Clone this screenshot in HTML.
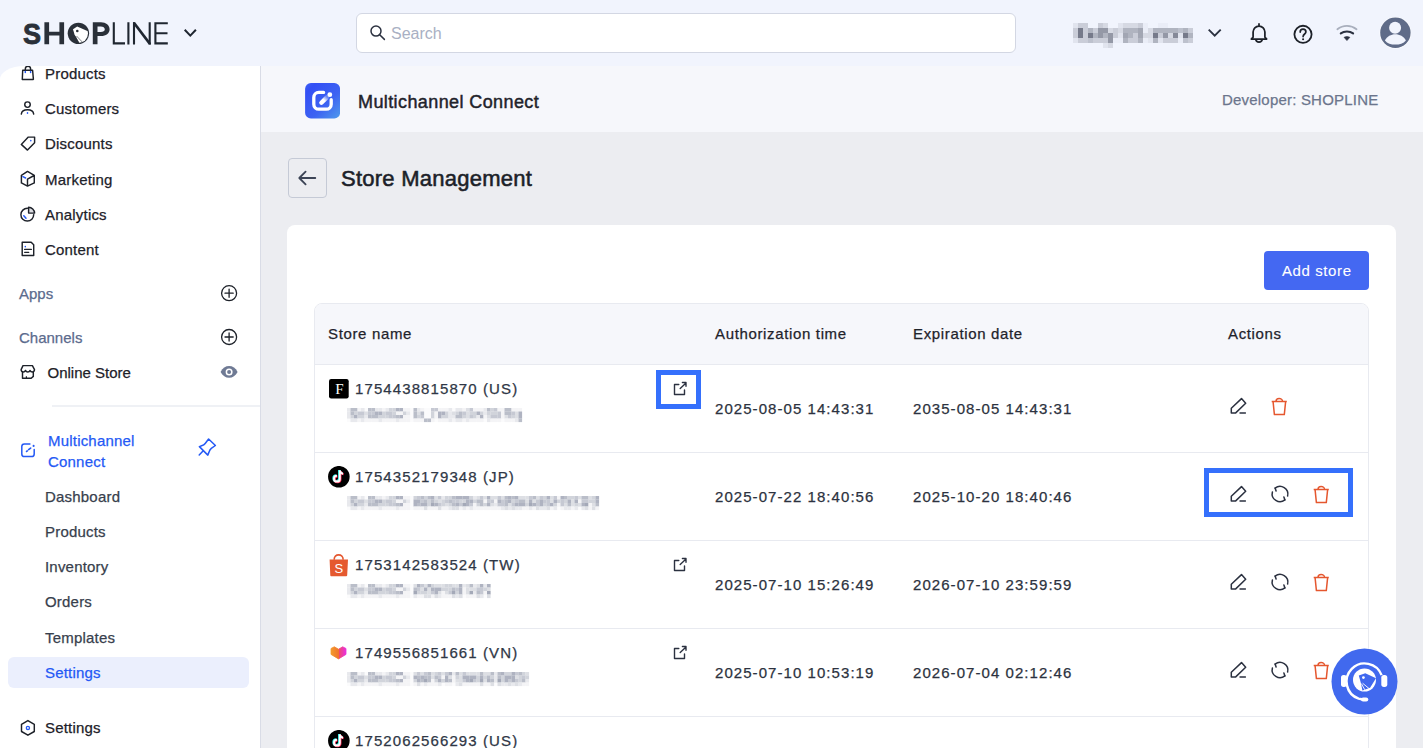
<!DOCTYPE html>
<html><head><meta charset="utf-8">
<style>
*{margin:0;padding:0;box-sizing:border-box}
html,body{-webkit-text-stroke:0.25px currentColor;width:1423px;height:748px;overflow:hidden;background:#f1f4fd;font-family:"Liberation Sans",sans-serif;}
.a{position:absolute;white-space:nowrap}
#hdr{position:absolute;left:0;top:0;width:1423px;height:66px;background:#f1f4fd}
#side{position:absolute;left:0;top:66px;width:261px;height:682px;background:#fff;border-right:1px solid #d9dce6;border-top-left-radius:24px 13.5px;overflow:hidden}
#main{position:absolute;left:261px;top:66px;width:1162px;height:682px;background:#ecedf1}
#apphdr{position:absolute;left:0;top:0;width:1162px;height:66px;background:#f6f7fb}
.si{position:absolute;font-size:15px;color:#1d2129;line-height:18px;letter-spacing:0.2px}
.sub{position:absolute;font-size:15px;color:#383f4d;line-height:18px;left:45px;letter-spacing:0.2px}
.lbl{position:absolute;font-size:15px;color:#5b6b8d;line-height:18px;left:19px}
.card{position:absolute;left:27px;top:159px;width:1107px;height:600px;background:#fff;border-radius:8px}
.tbl{position:absolute;left:53px;top:237px;width:1055px;height:600px;border:1px solid #e8eaf0;border-radius:8px;overflow:hidden}
.th{position:absolute;left:0;top:0;width:1055px;height:61px;background:#f6f7fb;border-bottom:1px solid #e8eaf0}
.row{position:absolute;left:0;width:1055px;height:88px;border-bottom:1px solid #e8eaf0}
.nm{font-size:15px;line-height:18px;color:#2f3746;letter-spacing:1.1px}
.dt{font-size:15px;line-height:18px;color:#2c3240;letter-spacing:1.06px}
.t15{font-size:15px;line-height:18px;color:#2c3240;letter-spacing:0.65px}
</style></head>
<body>
<div id="hdr">
  <svg class="a" style="left:0;top:0" width="220" height="66" viewBox="0 0 220 66">
    <text x="23.1" y="44.3" font-family="Liberation Sans" font-weight="bold" font-size="30" fill="#2a3039" stroke="#2a3039" stroke-width="0.9" textLength="18" lengthAdjust="spacingAndGlyphs">S</text>
    <path d="M44.4 22.3h4.7v9.4h10.3v-9.4h4.7v22h-4.7v-8.9h-10.3v8.9h-4.7z" fill="#2a3039"/>
    <defs><clipPath id="oc"><circle cx="78.4" cy="33.35" r="9.6"/></clipPath></defs>
    <circle cx="78.4" cy="33.35" r="10.7" fill="#2a3039"/>
    <g clip-path="url(#oc)">
      <path d="M73 29.2 L77.2 26.6 L92 33 L86 48 L80.5 45 L74.5 34.5 Z" fill="#fff"/>
      <path d="M75.2 36.2 L79.8 44.5 M76.5 36 L84 43.8" stroke="#2a3039" stroke-width="0.6"/>
    </g>
    <circle cx="77.3" cy="31" r="1.3" fill="#2a3039"/>
    <path d="M92.8 22.3h8.2c5 0 8.6 3 8.6 6.9s-3.6 6.9-8.6 6.9h-3.5v8.2h-4.7z M97.5 26.4v5.6h3.3c2.4 0 4-1.1 4-2.8s-1.6-2.8-4-2.8z" fill="#2a3039" fill-rule="evenodd"/>
    <path d="M113.8 22.3V43.4H125 M128.4 22.3V44.4 M134 44.4V22.3 M149.7 44.4V22.3 M167.8 23.3H155.4V43.4H167.8 M155.4 33.2H167.5" stroke="#1f2630" stroke-width="2.1" fill="none"/>
    <path d="M133 22.3h2.2l15.7 20.6v1.5h-2.2l-15.7-20.6z" fill="#1f2630"/>
    <path d="M184.7 29.8l5.6 5.8 5.6-5.8" stroke="#1f2630" stroke-width="2" fill="none"/>
  </svg>
  <div class="a" style="left:356px;top:13px;width:660px;height:40px;background:#fff;border:1px solid #d3d7e3;border-radius:6px"></div>
  <svg class="a" style="left:366px;top:22px" width="24" height="22" viewBox="0 0 24 22">
    <circle cx="10" cy="9.1" r="5" stroke="#2b3140" stroke-width="1.5" fill="none"/>
    <path d="M13.7 12.8L18.4 17.4" stroke="#2b3140" stroke-width="1.5" stroke-linecap="round"/>
  </svg>
  <div class="a" style="left:391px;top:25px;font-size:16px;color:#a9b0c3;line-height:18px;-webkit-text-stroke:0">Search</div>
  <svg class="a" width="121" height="25" viewBox="0 0 121 25" shape-rendering="crispEdges" style="left:1073px;top:23px;filter:blur(0.5px)"><rect x="0" y="0" width="5" height="5" fill="#e1e4ee"/><rect x="0" y="5" width="5" height="5" fill="#cacdd8"/><rect x="0" y="10" width="5" height="5" fill="#cacdd8"/><rect x="0" y="15" width="5" height="5" fill="#e1e4ee"/><rect x="5" y="0" width="5" height="5" fill="#cacdd8"/><rect x="5" y="5" width="5" height="5" fill="#767a8a"/><rect x="5" y="10" width="5" height="5" fill="#767a8a"/><rect x="5" y="15" width="5" height="5" fill="#cacdd8"/><rect x="10" y="0" width="5" height="5" fill="#cacdd8"/><rect x="10" y="5" width="5" height="5" fill="#cacdd8"/><rect x="10" y="10" width="5" height="5" fill="#cacdd8"/><rect x="10" y="15" width="5" height="5" fill="#cacdd8"/><rect x="15" y="5" width="5" height="5" fill="#b0b4c0"/><rect x="15" y="10" width="5" height="5" fill="#767a8a"/><rect x="15" y="15" width="5" height="5" fill="#bdc1cd"/><rect x="20" y="5" width="5" height="5" fill="#cacdd8"/><rect x="20" y="10" width="5" height="5" fill="#b0b4c0"/><rect x="20" y="15" width="5" height="5" fill="#cacdd8"/><rect x="25" y="0" width="5" height="5" fill="#cacdd8"/><rect x="25" y="5" width="5" height="5" fill="#9498a6"/><rect x="25" y="10" width="5" height="5" fill="#9498a6"/><rect x="25" y="15" width="5" height="5" fill="#cacdd8"/><rect x="30" y="0" width="5" height="5" fill="#d6d9e3"/><rect x="30" y="5" width="5" height="5" fill="#9498a6"/><rect x="30" y="10" width="5" height="5" fill="#b0b4c0"/><rect x="30" y="15" width="5" height="5" fill="#cacdd8"/><rect x="30" y="20" width="5" height="5" fill="#e1e4ee"/><rect x="35" y="5" width="5" height="5" fill="#d6d9e3"/><rect x="35" y="10" width="5" height="5" fill="#9498a6"/><rect x="35" y="15" width="5" height="5" fill="#9498a6"/><rect x="35" y="20" width="5" height="5" fill="#d6d9e3"/><rect x="40" y="5" width="5" height="5" fill="#cacdd8"/><rect x="40" y="10" width="5" height="5" fill="#cacdd8"/><rect x="40" y="15" width="5" height="5" fill="#eaedf7"/><rect x="45" y="0" width="5" height="5" fill="#e1e4ee"/><rect x="45" y="5" width="5" height="5" fill="#d6d9e3"/><rect x="45" y="10" width="5" height="5" fill="#e1e4ee"/><rect x="45" y="15" width="5" height="5" fill="#eaedf7"/><rect x="50" y="0" width="5" height="5" fill="#d6d9e3"/><rect x="50" y="5" width="5" height="5" fill="#b0b4c0"/><rect x="50" y="10" width="5" height="5" fill="#a2a6b3"/><rect x="50" y="15" width="5" height="5" fill="#b0b4c0"/><rect x="55" y="0" width="5" height="5" fill="#d6d9e3"/><rect x="55" y="5" width="5" height="5" fill="#b0b4c0"/><rect x="55" y="10" width="5" height="5" fill="#b0b4c0"/><rect x="55" y="15" width="5" height="5" fill="#cacdd8"/><rect x="60" y="0" width="5" height="5" fill="#d6d9e3"/><rect x="60" y="5" width="5" height="5" fill="#b0b4c0"/><rect x="60" y="10" width="5" height="5" fill="#cacdd8"/><rect x="60" y="15" width="5" height="5" fill="#cacdd8"/><rect x="65" y="0" width="5" height="5" fill="#cacdd8"/><rect x="65" y="5" width="5" height="5" fill="#a2a6b3"/><rect x="65" y="10" width="5" height="5" fill="#a2a6b3"/><rect x="65" y="15" width="5" height="5" fill="#b0b4c0"/><rect x="70" y="0" width="5" height="5" fill="#eaedf7"/><rect x="70" y="5" width="5" height="5" fill="#eaedf7"/><rect x="70" y="10" width="5" height="5" fill="#d6d9e3"/><rect x="70" y="15" width="5" height="5" fill="#eaedf7"/><rect x="75" y="5" width="5" height="5" fill="#d6d9e3"/><rect x="75" y="10" width="5" height="5" fill="#d6d9e3"/><rect x="75" y="15" width="5" height="5" fill="#e1e4ee"/><rect x="80" y="5" width="5" height="5" fill="#b0b4c0"/><rect x="80" y="10" width="5" height="5" fill="#767a8a"/><rect x="80" y="15" width="5" height="5" fill="#b0b4c0"/><rect x="85" y="0" width="5" height="5" fill="#eaedf7"/><rect x="85" y="5" width="5" height="5" fill="#b0b4c0"/><rect x="85" y="10" width="5" height="5" fill="#cacdd8"/><rect x="85" y="15" width="5" height="5" fill="#e1e4ee"/><rect x="90" y="0" width="5" height="5" fill="#eaedf7"/><rect x="90" y="5" width="5" height="5" fill="#b0b4c0"/><rect x="90" y="10" width="5" height="5" fill="#9498a6"/><rect x="90" y="15" width="5" height="5" fill="#cacdd8"/><rect x="95" y="5" width="5" height="5" fill="#b0b4c0"/><rect x="95" y="10" width="5" height="5" fill="#d6d9e3"/><rect x="95" y="15" width="5" height="5" fill="#cacdd8"/><rect x="100" y="5" width="5" height="5" fill="#b0b4c0"/><rect x="100" y="10" width="5" height="5" fill="#858998"/><rect x="100" y="15" width="5" height="5" fill="#cacdd8"/><rect x="105" y="5" width="5" height="5" fill="#bdc1cd"/><rect x="105" y="10" width="5" height="5" fill="#e1e4ee"/><rect x="105" y="15" width="5" height="5" fill="#eaedf7"/><rect x="110" y="5" width="5" height="5" fill="#b0b4c0"/><rect x="110" y="10" width="5" height="5" fill="#767a8a"/><rect x="110" y="15" width="5" height="5" fill="#bdc1cd"/><rect x="115" y="5" width="5" height="5" fill="#cacdd8"/><rect x="115" y="10" width="5" height="5" fill="#b0b4c0"/><rect x="115" y="15" width="5" height="5" fill="#cacdd8"/></svg>
  <svg class="a" style="left:1205px;top:25px" width="20" height="16" viewBox="0 0 20 16">
    <path d="M3.7 4.6l6 6 6-6" stroke="#2b3140" stroke-width="1.9" fill="none"/>
  </svg>
  <svg class="a" style="left:1246px;top:20px" width="26" height="26" viewBox="0 0 26 26">
    <path d="M13 3.9v2.1 M7.1 17.2V12.1c0-3.3 2.6-6.1 5.9-6.1s5.9 2.8 5.9 6.1v5.1l1.8 1.8H5.3z M9.7 19.2c.3 1.8 1.6 3 3.3 3s3-1.2 3.3-3" stroke="#1d2129" stroke-width="1.75" fill="none" stroke-linejoin="round" stroke-linecap="round"/>
  </svg>
  <svg class="a" style="left:1290px;top:21px" width="26" height="26" viewBox="0 0 26 26">
    <circle cx="13" cy="13.35" r="8.6" stroke="#1d2129" stroke-width="1.8" fill="none"/>
    <path d="M10.2 11.1c0-1.7 1.2-2.9 2.8-2.9s2.9 1.2 2.9 2.8c0 1.9-2.8 2.2-2.8 4.6" stroke="#1d2129" stroke-width="1.7" fill="none" stroke-linecap="round"/>
    <circle cx="13.1" cy="18.2" r="1.05" fill="#1d2129"/>
  </svg>
  <svg class="a" style="left:1334px;top:20px" width="26" height="26" viewBox="0 0 26 26">
    <path d="M3.4 9.2C6 7.1 9.3 5.9 12.95 5.9S19.9 7.1 22.5 9.2" stroke="#a9afbd" stroke-width="1.9" fill="none" stroke-linecap="round"/>
    <path d="M6.8 13.3C8.5 12.1 10.6 11.5 12.95 11.5S17.4 12.1 19.1 13.3" stroke="#2b3140" stroke-width="2.1" fill="none" stroke-linecap="round"/>
    <path d="M10 17.3Q12.95 15.6 15.9 17.3L12.95 20.6z" fill="#2b3140" stroke="#2b3140" stroke-width="0.6" stroke-linejoin="round"/>
  </svg>
  <svg class="a" style="left:1379px;top:17px" width="33" height="33" viewBox="0 0 33 33">
    <circle cx="16.4" cy="15.8" r="15.8" fill="#fff"/>
    <circle cx="16.4" cy="15.8" r="15.2" fill="#5f6b88"/>
    <circle cx="16.1" cy="10.7" r="6" fill="#f1f4fd"/>
    <path d="M5.9 23.4C8 19.4 12 17.2 16.3 17.2S24.8 19.4 26.9 23.4C24.4 26.3 20.6 27.6 16.3 27.6S8.3 26.3 5.9 23.4Z" fill="#f1f4fd"/>
  </svg>
</div>

<div id="side">
<svg class="a" style="left:0;top:-66px" width="260" height="748" viewBox="0 0 260 748">
  <g fill="none" stroke="#1d2129" stroke-width="1.45" stroke-linejoin="round" stroke-linecap="round">
    <path d="M22.7 70.2H32.6L33.4 79.4H22.3Z"/>
    <path d="M25.3 70V68.9C25.3 67.4 26.5 66.3 28 66.3S30.6 67.4 30.6 68.9V70"/>
    <circle cx="27.5" cy="104.6" r="2.75"/>
    <path d="M21.3 114.1C21.6 111.4 24.3 109.7 27.5 109.7S33.4 111.4 33.7 114.1"/>
    <path d="M21.3 144.4L28.3 137.1H34.6V142.8L27.5 150.1Z"/>
    <path d="M27.5 171.4L34.3 175.3V182.9L27.5 186.1L21.4 182.9V175.3Z M27.5 179.2L34.1 175.5 M27.5 179.2V185.8"/>
    <path d="M27.4 208.3A6.4 6.4 0 1 0 33.7 214.6"/>
    <path d="M28.6 213.1V207.3A6.1 6.1 0 0 1 34.6 213.1Z" fill="#dcdde2"/>
    <path d="M22.2 242.3H31.2L33.7 244.8V255.5H22.2Z"/>
    <path d="M24.6 249.4H31.4 M24.6 252.3H28.8" stroke-width="1.2"/>
    <path d="M23 365.6H32.4L34.5 369.6C34.5 371 33.5 372 32.3 372S30.4 371.2 30.1 370.4C29.7 371.3 28.9 372 27.8 372S25.9 371.3 25.5 370.4C25.1 371.3 24.3 372 23.3 372C22 372 21.1 371 21.1 369.6Z"/>
    <path d="M22.5 372.2V378.3H31.2L33.3 376.4V372.2"/>
    <circle cx="229.1" cy="293.2" r="7.5" stroke-width="1.3"/>
    <path d="M229.1 289.1V297.3 M225 293.2H233.2" stroke-width="1.3"/>
    <circle cx="229.1" cy="337" r="7.5" stroke-width="1.3"/>
    <path d="M229.1 332.9V341.1 M225 337H233.2" stroke-width="1.3"/>
    <path d="M27.9 720.6L34.3 724.3V731.5L27.9 735.2L21.5 731.5V724.3Z"/>
  </g>
  <path d="M25.8 376.2H27V378H25.8z" fill="#1d2129"/>
  <g stroke="#2459f5" stroke-width="1.5" stroke-linecap="round" fill="none">
    <path d="M25.3 71.6V72.6 M30.6 71.6V72.6"/>
    <path d="M27.5 112.7V113.2"/>
    <path d="M30.8 140.5V140.8"/>
    <path d="M22.9 176.6L25.6 178"/>
    <path d="M23.8 215.7L26 218.2"/>
    <path d="M25.3 246.5V246.7"/>
  </g>
  <circle cx="27.9" cy="727.9" r="1.6" fill="none" stroke="#2459f5" stroke-width="1.3"/>
  <path d="M220.6 371.9C222.6 368.1 225.6 366.1 229.1 366.1S235.6 368.1 237.6 371.9C235.6 375.7 232.6 377.7 229.1 377.7S222.6 375.7 220.6 371.9Z" fill="#6f7a94"/>
  <circle cx="229.1" cy="371.9" r="3.5" fill="#fff"/>
  <circle cx="229.1" cy="371.9" r="2" fill="#6f7a94"/>
  <g fill="none" stroke="#2459f5" stroke-width="1.5" stroke-linecap="round" stroke-linejoin="round">
    <path d="M29.9 444H24.4C22.9 444 21.8 445.1 21.8 446.6V454C21.8 455.5 22.9 456.6 24.4 456.6H31.6C33.1 456.6 34.2 455.5 34.2 454V449.4"/>
    <path d="M26.6 451.4L27.3 450.9 M28.6 449.6L30.6 448.1" stroke-width="1.7"/>
    <path d="M208.6 439L215.4 445.5L211.3 448.3C209.8 449.5 209.4 450.8 208.7 452.9L207.8 455.1L199.4 446.6L201.6 445.8C203.4 445.3 204.4 444.6 205.2 443.5Z"/>
    <path d="M203 451.1L199.2 455"/>
  </g>
  <circle cx="33.6" cy="445.9" r="1.05" fill="#2459f5"/>
</svg>
  <div class="si" style="left:45px;top:-1px">Products</div>
  <div class="si" style="left:45px;top:34px">Customers</div>
  <div class="si" style="left:45px;top:69px">Discounts</div>
  <div class="si" style="left:45px;top:105px">Marketing</div>
  <div class="si" style="left:45px;top:140px">Analytics</div>
  <div class="si" style="left:45px;top:175px">Content</div>
  <div class="lbl" style="top:219px">Apps</div>
  <div class="lbl" style="top:263px">Channels</div>
  <div class="si" style="left:47.5px;top:298px;letter-spacing:0">Online Store</div>
  <div class="a" style="left:52px;top:339px;width:208px;height:2px;background:#eff1f5"></div>
  <div class="si" style="left:48px;top:364px;color:#2459f5;line-height:22px">Multichannel</div><div class="si" style="left:48px;top:385px;color:#2459f5;line-height:22px">Connect</div>
  <div class="sub" style="top:422px">Dashboard</div>
  <div class="sub" style="top:457px">Products</div>
  <div class="sub" style="top:492px">Inventory</div>
  <div class="sub" style="top:527px">Orders</div>
  <div class="sub" style="top:563px">Templates</div>
  <div class="a" style="left:8px;top:591px;width:241px;height:31px;background:#ebeffd;border-radius:6px"></div>
  <div class="sub" style="top:598px;color:#2459f5">Settings</div>
  <div class="si" style="left:45px;top:653px">Settings</div>
</div>

<div id="main"></div>
<div class="a" style="left:261px;top:66px;width:1162px;height:66px;background:#f6f7fb"></div>
<svg class="a" style="left:305px;top:83px" width="35" height="36" viewBox="0 0 35 36">
  <defs><linearGradient id="ag" x1="0" y1="0" x2="1" y2="1"><stop offset="0" stop-color="#3f62f4"/><stop offset="0.15" stop-color="#334ff5"/><stop offset="0.6" stop-color="#3d63f2"/><stop offset="1" stop-color="#4f9bec"/></linearGradient>
  <linearGradient id="pg" x1="16.4" y1="19.75" x2="22" y2="14" gradientUnits="userSpaceOnUse"><stop offset="0" stop-color="#fff"/><stop offset="0.45" stop-color="#fff"/><stop offset="1" stop-color="#fff" stop-opacity="0.25"/></linearGradient></defs>
  <rect x="0.1" y="0.1" width="35" height="35.4" rx="5.8" fill="url(#ag)"/>
  <path d="M18.6 9.4H13.8C11 9.4 8.8 11.6 8.8 14.4V21.2C8.8 24 11 26.2 13.8 26.2H21.2C24 26.2 26.2 24 26.2 21.2V16.7" stroke="#fff" stroke-width="3.3" fill="none" stroke-linecap="round"/>
  <circle cx="24.8" cy="11.7" r="2.4" fill="#fff"/>
  <path d="M16.4 19.75L21.8 14.4" stroke="url(#pg)" stroke-width="4.4" stroke-linecap="round"/>
</svg>
<div class="a" style="left:358px;top:91px;font-size:18px;color:#1f232b;line-height:22px;letter-spacing:0.4px;-webkit-text-stroke:0.45px #1f232b">Multichannel Connect</div>
<div class="a" style="left:1222px;top:91px;font-size:15px;color:#6b758c;line-height:18px;letter-spacing:0.2px">Developer: SHOPLINE</div>

<div class="a" style="left:288px;top:158px;width:39px;height:40px;border:1px solid #c5cad6;border-radius:4px"></div>
<svg class="a" style="left:294px;top:165px" width="26" height="26" viewBox="0 0 26 26">
  <path d="M21.3 13H5.5 M11.6 6.6L5.3 13L11.6 19.4" stroke="#3c4456" stroke-width="1.8" fill="none" stroke-linecap="round" stroke-linejoin="round"/>
</svg>
<div class="a" style="left:341px;top:166px;font-size:22px;color:#1c1f29;line-height:26px;letter-spacing:0.25px;-webkit-text-stroke:0.55px #1c1f29">Store Management</div>

<div class="a" style="left:287px;top:224.5px;width:1108.5px;height:600px;background:#fff;border-radius:8px"></div>
<div class="a" style="left:1264px;top:251px;width:105px;height:39px;background:#4468f2;border-radius:4px"></div>
<div class="a" style="left:1282px;top:262px;font-size:15px;color:#fff;line-height:18px;letter-spacing:0.6px;-webkit-text-stroke:0.1px #fff">Add store</div>

<div class="a" style="left:314px;top:303px;width:1055px;height:600px;border:1px solid #e8eaf0;border-radius:8px;overflow:hidden">
  <div class="a" style="left:0;top:0;width:1055px;height:61px;background:#f6f7fb;border-bottom:1px solid #e8eaf0"></div>
  <div class="a" style="left:0;top:148px;width:1055px;height:1px;background:#e8eaf0"></div>
  <div class="a" style="left:0;top:236px;width:1055px;height:1px;background:#e8eaf0"></div>
  <div class="a" style="left:0;top:324px;width:1055px;height:1px;background:#e8eaf0"></div>
  <div class="a" style="left:0;top:412px;width:1055px;height:1px;background:#e8eaf0"></div>
</div>
<div class="a t15" style="left:328px;top:325px;color:#1f232b">Store name</div>
<div class="a t15" style="left:715px;top:325px;color:#1f232b">Authorization time</div>
<div class="a t15" style="left:913px;top:325px;color:#1f232b">Expiration date</div>
<div class="a t15" style="left:1228px;top:325px;color:#1f232b">Actions</div>
<svg class="a" style="left:329px;top:379px" width="20" height="20" viewBox="0 0 20 20"><rect width="19.7" height="19.5" rx="2.2" fill="#000"/><text x="10.3" y="14.9" text-anchor="middle" font-family="Liberation Serif" font-size="15" fill="#fff">F</text></svg>
<div class="a nm" style="left:355px;top:380px">1754438815870 (US)</div>
<svg class="a" style="left:346.8px;top:408.0px;filter:blur(0.45px)" width="176" height="15" viewBox="0 0 176 15"><rect x="0" y="0" width="175.0" height="14" fill="#fbfbfc"/><rect x="0.0" y="0.0" width="3.6" height="3.6" fill="#e8e9ed"/><rect x="0.0" y="3.5" width="3.6" height="3.6" fill="#e8e9ed"/><rect x="0.0" y="7.0" width="3.6" height="3.6" fill="#e8e9ed"/><rect x="3.5" y="0.0" width="3.6" height="3.6" fill="#babec9"/><rect x="3.5" y="3.5" width="3.6" height="3.6" fill="#babec9"/><rect x="3.5" y="7.0" width="3.6" height="3.6" fill="#d1d4db"/><rect x="3.5" y="10.5" width="3.6" height="3.6" fill="#e8e9ed"/><rect x="7.0" y="0.0" width="3.6" height="3.6" fill="#babec9"/><rect x="7.0" y="3.5" width="3.6" height="3.6" fill="#d1d4db"/><rect x="7.0" y="7.0" width="3.6" height="3.6" fill="#afb3c1"/><rect x="7.0" y="10.5" width="3.6" height="3.6" fill="#e8e9ed"/><rect x="10.5" y="0.0" width="3.6" height="3.6" fill="#f4f4f6"/><rect x="10.5" y="3.5" width="3.6" height="3.6" fill="#c6c9d3"/><rect x="10.5" y="7.0" width="3.6" height="3.6" fill="#d1d4db"/><rect x="10.5" y="10.5" width="3.6" height="3.6" fill="#f4f4f6"/><rect x="14.0" y="0.0" width="3.6" height="3.6" fill="#e8e9ed"/><rect x="14.0" y="3.5" width="3.6" height="3.6" fill="#c6c9d3"/><rect x="14.0" y="7.0" width="3.6" height="3.6" fill="#d1d4db"/><rect x="14.0" y="10.5" width="3.6" height="3.6" fill="#e8e9ed"/><rect x="17.5" y="3.5" width="3.6" height="3.6" fill="#dddfe4"/><rect x="17.5" y="7.0" width="3.6" height="3.6" fill="#e8e9ed"/><rect x="17.5" y="10.5" width="3.6" height="3.6" fill="#f4f4f6"/><rect x="21.0" y="0.0" width="3.6" height="3.6" fill="#babec9"/><rect x="21.0" y="3.5" width="3.6" height="3.6" fill="#c6c9d3"/><rect x="21.0" y="7.0" width="3.6" height="3.6" fill="#babec9"/><rect x="21.0" y="10.5" width="3.6" height="3.6" fill="#f4f4f6"/><rect x="24.5" y="0.0" width="3.6" height="3.6" fill="#babec9"/><rect x="24.5" y="3.5" width="3.6" height="3.6" fill="#c6c9d3"/><rect x="24.5" y="7.0" width="3.6" height="3.6" fill="#babec9"/><rect x="24.5" y="10.5" width="3.6" height="3.6" fill="#f4f4f6"/><rect x="28.0" y="0.0" width="3.6" height="3.6" fill="#e8e9ed"/><rect x="28.0" y="3.5" width="3.6" height="3.6" fill="#afb3c1"/><rect x="28.0" y="7.0" width="3.6" height="3.6" fill="#babec9"/><rect x="28.0" y="10.5" width="3.6" height="3.6" fill="#f4f4f6"/><rect x="31.5" y="0.0" width="3.6" height="3.6" fill="#e8e9ed"/><rect x="31.5" y="3.5" width="3.6" height="3.6" fill="#afb3c1"/><rect x="31.5" y="7.0" width="3.6" height="3.6" fill="#d1d4db"/><rect x="31.5" y="10.5" width="3.6" height="3.6" fill="#e8e9ed"/><rect x="35.0" y="0.0" width="3.6" height="3.6" fill="#f4f4f6"/><rect x="35.0" y="3.5" width="3.6" height="3.6" fill="#d1d4db"/><rect x="35.0" y="7.0" width="3.6" height="3.6" fill="#d1d4db"/><rect x="35.0" y="10.5" width="3.6" height="3.6" fill="#f4f4f6"/><rect x="38.5" y="0.0" width="3.6" height="3.6" fill="#e8e9ed"/><rect x="38.5" y="3.5" width="3.6" height="3.6" fill="#c6c9d3"/><rect x="38.5" y="7.0" width="3.6" height="3.6" fill="#d1d4db"/><rect x="38.5" y="10.5" width="3.6" height="3.6" fill="#f4f4f6"/><rect x="42.0" y="0.0" width="3.6" height="3.6" fill="#d1d4db"/><rect x="42.0" y="3.5" width="3.6" height="3.6" fill="#c6c9d3"/><rect x="42.0" y="7.0" width="3.6" height="3.6" fill="#c6c9d3"/><rect x="42.0" y="10.5" width="3.6" height="3.6" fill="#f4f4f6"/><rect x="45.5" y="0.0" width="3.6" height="3.6" fill="#d1d4db"/><rect x="45.5" y="3.5" width="3.6" height="3.6" fill="#d1d4db"/><rect x="45.5" y="7.0" width="3.6" height="3.6" fill="#c6c9d3"/><rect x="45.5" y="10.5" width="3.6" height="3.6" fill="#f4f4f6"/><rect x="49.0" y="0.0" width="3.6" height="3.6" fill="#afb3c1"/><rect x="49.0" y="3.5" width="3.6" height="3.6" fill="#f4f4f6"/><rect x="49.0" y="7.0" width="3.6" height="3.6" fill="#babec9"/><rect x="49.0" y="10.5" width="3.6" height="3.6" fill="#e8e9ed"/><rect x="52.5" y="0.0" width="3.6" height="3.6" fill="#afb3c1"/><rect x="52.5" y="3.5" width="3.6" height="3.6" fill="#f4f4f6"/><rect x="52.5" y="7.0" width="3.6" height="3.6" fill="#afb3c1"/><rect x="52.5" y="10.5" width="3.6" height="3.6" fill="#f4f4f6"/><rect x="56.0" y="0.0" width="3.6" height="3.6" fill="#f4f4f6"/><rect x="56.0" y="3.5" width="3.6" height="3.6" fill="#d1d4db"/><rect x="56.0" y="7.0" width="3.6" height="3.6" fill="#f4f4f6"/><rect x="56.0" y="10.5" width="3.6" height="3.6" fill="#f4f4f6"/><rect x="59.5" y="0.0" width="3.6" height="3.6" fill="#f4f4f6"/><rect x="59.5" y="3.5" width="3.6" height="3.6" fill="#e8e9ed"/><rect x="59.5" y="7.0" width="3.6" height="3.6" fill="#f4f4f6"/><rect x="59.5" y="10.5" width="3.6" height="3.6" fill="#f4f4f6"/><rect x="66.5" y="0.0" width="3.6" height="3.6" fill="#babec9"/><rect x="66.5" y="3.5" width="3.6" height="3.6" fill="#babec9"/><rect x="66.5" y="7.0" width="3.6" height="3.6" fill="#babec9"/><rect x="66.5" y="10.5" width="3.6" height="3.6" fill="#f4f4f6"/><rect x="70.0" y="0.0" width="3.6" height="3.6" fill="#e8e9ed"/><rect x="70.0" y="3.5" width="3.6" height="3.6" fill="#dddfe4"/><rect x="70.0" y="7.0" width="3.6" height="3.6" fill="#d1d4db"/><rect x="70.0" y="10.5" width="3.6" height="3.6" fill="#f4f4f6"/><rect x="73.5" y="0.0" width="3.6" height="3.6" fill="#f4f4f6"/><rect x="73.5" y="3.5" width="3.6" height="3.6" fill="#babec9"/><rect x="73.5" y="7.0" width="3.6" height="3.6" fill="#c6c9d3"/><rect x="73.5" y="10.5" width="3.6" height="3.6" fill="#f4f4f6"/><rect x="77.0" y="10.5" width="3.6" height="3.6" fill="#babec9"/><rect x="80.5" y="10.5" width="3.6" height="3.6" fill="#babec9"/><rect x="84.0" y="0.0" width="3.6" height="3.6" fill="#c6c9d3"/><rect x="84.0" y="3.5" width="3.6" height="3.6" fill="#d1d4db"/><rect x="84.0" y="7.0" width="3.6" height="3.6" fill="#d1d4db"/><rect x="84.0" y="10.5" width="3.6" height="3.6" fill="#f4f4f6"/><rect x="87.5" y="0.0" width="3.6" height="3.6" fill="#c6c9d3"/><rect x="87.5" y="3.5" width="3.6" height="3.6" fill="#f4f4f6"/><rect x="87.5" y="7.0" width="3.6" height="3.6" fill="#f4f4f6"/><rect x="91.0" y="0.0" width="3.6" height="3.6" fill="#f4f4f6"/><rect x="91.0" y="3.5" width="3.6" height="3.6" fill="#afb3c1"/><rect x="91.0" y="7.0" width="3.6" height="3.6" fill="#afb3c1"/><rect x="91.0" y="10.5" width="3.6" height="3.6" fill="#f4f4f6"/><rect x="94.5" y="0.0" width="3.6" height="3.6" fill="#f4f4f6"/><rect x="94.5" y="3.5" width="3.6" height="3.6" fill="#afb3c1"/><rect x="94.5" y="7.0" width="3.6" height="3.6" fill="#d1d4db"/><rect x="94.5" y="10.5" width="3.6" height="3.6" fill="#f4f4f6"/><rect x="98.0" y="0.0" width="3.6" height="3.6" fill="#f4f4f6"/><rect x="98.0" y="3.5" width="3.6" height="3.6" fill="#d1d4db"/><rect x="98.0" y="7.0" width="3.6" height="3.6" fill="#d1d4db"/><rect x="98.0" y="10.5" width="3.6" height="3.6" fill="#f4f4f6"/><rect x="101.5" y="0.0" width="3.6" height="3.6" fill="#e8e9ed"/><rect x="101.5" y="3.5" width="3.6" height="3.6" fill="#e8e9ed"/><rect x="101.5" y="7.0" width="3.6" height="3.6" fill="#e8e9ed"/><rect x="101.5" y="10.5" width="3.6" height="3.6" fill="#e8e9ed"/><rect x="105.0" y="3.5" width="3.6" height="3.6" fill="#dddfe4"/><rect x="105.0" y="7.0" width="3.6" height="3.6" fill="#e8e9ed"/><rect x="105.0" y="10.5" width="3.6" height="3.6" fill="#f4f4f6"/><rect x="108.5" y="0.0" width="3.6" height="3.6" fill="#e8e9ed"/><rect x="108.5" y="3.5" width="3.6" height="3.6" fill="#d1d4db"/><rect x="108.5" y="7.0" width="3.6" height="3.6" fill="#babec9"/><rect x="108.5" y="10.5" width="3.6" height="3.6" fill="#e8e9ed"/><rect x="112.0" y="0.0" width="3.6" height="3.6" fill="#e8e9ed"/><rect x="112.0" y="3.5" width="3.6" height="3.6" fill="#babec9"/><rect x="112.0" y="7.0" width="3.6" height="3.6" fill="#babec9"/><rect x="112.0" y="10.5" width="3.6" height="3.6" fill="#e8e9ed"/><rect x="115.5" y="0.0" width="3.6" height="3.6" fill="#f4f4f6"/><rect x="115.5" y="3.5" width="3.6" height="3.6" fill="#c6c9d3"/><rect x="115.5" y="7.0" width="3.6" height="3.6" fill="#d1d4db"/><rect x="115.5" y="10.5" width="3.6" height="3.6" fill="#f4f4f6"/><rect x="119.0" y="0.0" width="3.6" height="3.6" fill="#dddfe4"/><rect x="119.0" y="3.5" width="3.6" height="3.6" fill="#dddfe4"/><rect x="119.0" y="7.0" width="3.6" height="3.6" fill="#dddfe4"/><rect x="119.0" y="10.5" width="3.6" height="3.6" fill="#e8e9ed"/><rect x="122.5" y="0.0" width="3.6" height="3.6" fill="#c6c9d3"/><rect x="122.5" y="3.5" width="3.6" height="3.6" fill="#d1d4db"/><rect x="122.5" y="7.0" width="3.6" height="3.6" fill="#c6c9d3"/><rect x="122.5" y="10.5" width="3.6" height="3.6" fill="#f4f4f6"/><rect x="126.0" y="0.0" width="3.6" height="3.6" fill="#f4f4f6"/><rect x="126.0" y="3.5" width="3.6" height="3.6" fill="#d1d4db"/><rect x="126.0" y="7.0" width="3.6" height="3.6" fill="#d1d4db"/><rect x="126.0" y="10.5" width="3.6" height="3.6" fill="#f4f4f6"/><rect x="129.5" y="0.0" width="3.6" height="3.6" fill="#f4f4f6"/><rect x="129.5" y="3.5" width="3.6" height="3.6" fill="#afb3c1"/><rect x="129.5" y="7.0" width="3.6" height="3.6" fill="#e8e9ed"/><rect x="129.5" y="10.5" width="3.6" height="3.6" fill="#f4f4f6"/><rect x="133.0" y="0.0" width="3.6" height="3.6" fill="#f4f4f6"/><rect x="133.0" y="3.5" width="3.6" height="3.6" fill="#d1d4db"/><rect x="133.0" y="7.0" width="3.6" height="3.6" fill="#afb3c1"/><rect x="133.0" y="10.5" width="3.6" height="3.6" fill="#f4f4f6"/><rect x="136.5" y="0.0" width="3.6" height="3.6" fill="#e8e9ed"/><rect x="136.5" y="3.5" width="3.6" height="3.6" fill="#e8e9ed"/><rect x="136.5" y="7.0" width="3.6" height="3.6" fill="#f4f4f6"/><rect x="140.0" y="0.0" width="3.6" height="3.6" fill="#babec9"/><rect x="140.0" y="3.5" width="3.6" height="3.6" fill="#d1d4db"/><rect x="140.0" y="7.0" width="3.6" height="3.6" fill="#dddfe4"/><rect x="140.0" y="10.5" width="3.6" height="3.6" fill="#e8e9ed"/><rect x="143.5" y="0.0" width="3.6" height="3.6" fill="#d1d4db"/><rect x="143.5" y="3.5" width="3.6" height="3.6" fill="#d1d4db"/><rect x="143.5" y="7.0" width="3.6" height="3.6" fill="#c6c9d3"/><rect x="143.5" y="10.5" width="3.6" height="3.6" fill="#f4f4f6"/><rect x="147.0" y="0.0" width="3.6" height="3.6" fill="#c6c9d3"/><rect x="147.0" y="3.5" width="3.6" height="3.6" fill="#d1d4db"/><rect x="147.0" y="7.0" width="3.6" height="3.6" fill="#c6c9d3"/><rect x="147.0" y="10.5" width="3.6" height="3.6" fill="#f4f4f6"/><rect x="150.5" y="0.0" width="3.6" height="3.6" fill="#f4f4f6"/><rect x="150.5" y="3.5" width="3.6" height="3.6" fill="#c6c9d3"/><rect x="150.5" y="7.0" width="3.6" height="3.6" fill="#c6c9d3"/><rect x="150.5" y="10.5" width="3.6" height="3.6" fill="#f4f4f6"/><rect x="154.0" y="0.0" width="3.6" height="3.6" fill="#f4f4f6"/><rect x="154.0" y="3.5" width="3.6" height="3.6" fill="#f4f4f6"/><rect x="154.0" y="7.0" width="3.6" height="3.6" fill="#f4f4f6"/><rect x="157.5" y="0.0" width="3.6" height="3.6" fill="#babec9"/><rect x="157.5" y="3.5" width="3.6" height="3.6" fill="#babec9"/><rect x="157.5" y="7.0" width="3.6" height="3.6" fill="#dddfe4"/><rect x="157.5" y="10.5" width="3.6" height="3.6" fill="#f4f4f6"/><rect x="161.0" y="0.0" width="3.6" height="3.6" fill="#babec9"/><rect x="161.0" y="3.5" width="3.6" height="3.6" fill="#babec9"/><rect x="161.0" y="7.0" width="3.6" height="3.6" fill="#c6c9d3"/><rect x="161.0" y="10.5" width="3.6" height="3.6" fill="#f4f4f6"/><rect x="164.5" y="0.0" width="3.6" height="3.6" fill="#f4f4f6"/><rect x="164.5" y="3.5" width="3.6" height="3.6" fill="#c6c9d3"/><rect x="164.5" y="7.0" width="3.6" height="3.6" fill="#d1d4db"/><rect x="164.5" y="10.5" width="3.6" height="3.6" fill="#f4f4f6"/><rect x="168.0" y="0.0" width="3.6" height="3.6" fill="#f4f4f6"/><rect x="168.0" y="3.5" width="3.6" height="3.6" fill="#dddfe4"/><rect x="168.0" y="7.0" width="3.6" height="3.6" fill="#dddfe4"/><rect x="168.0" y="10.5" width="3.6" height="3.6" fill="#e8e9ed"/><rect x="171.5" y="0.0" width="3.6" height="3.6" fill="#f4f4f6"/><rect x="171.5" y="3.5" width="3.6" height="3.6" fill="#afb3c1"/><rect x="171.5" y="7.0" width="3.6" height="3.6" fill="#afb3c1"/><rect x="171.5" y="10.5" width="3.6" height="3.6" fill="#babec9"/></svg>
<svg class="a" style="left:670px;top:380px" width="20" height="20" viewBox="0 0 20 20"><path d="M8.8 4.5H4.5V14.5H14.5V10 M10.2 8.4L16 3 M12.4 2.5H16V6.2" stroke="#2b3140" stroke-width="1.4" fill="none" stroke-linecap="round" stroke-linejoin="round"/></svg>
<div class="a dt" style="left:715px;top:400px">2025-08-05 14:43:31</div>
<div class="a dt" style="left:913px;top:400px">2035-08-05 14:43:31</div>
<svg class="a" style="left:1227px;top:397px" width="24" height="22" viewBox="0 0 24 22"><path d="M4.3 15.9V11.2L14.5 1.6L18.7 6.2L8.7 15.9Z M12.5 15.9H18.9" stroke="#2b3140" stroke-width="1.5" fill="none" stroke-linejoin="round"/></svg>
<svg class="a" style="left:1271.3px;top:397px" width="20" height="22" viewBox="0 0 20 22"><g stroke="#e5572f" stroke-width="1.5" fill="none" stroke-linejoin="round"><path d="M.7 4.6H15.8 M5 4.4C5 2.8 6.3 1.6 8.1 1.6S11.6 2.8 11.6 4.4 M2.1 4.8L3.4 17.6H13.3L14.6 4.8"/></g></svg>
<svg class="a" style="left:328px;top:466px" width="22" height="22" viewBox="0 0 22 22"><circle cx="10.85" cy="10.75" r="10.8" fill="#000"/><g transform="translate(-0.5,0)"><path d="M12.3 4.6v8.1a2.9 2.9 0 1 1-2.9-2.9" stroke="#25f4ee" stroke-width="2.2" fill="none" transform="translate(-0.6,-0.5)"/><path d="M12.3 4.6c.3 1.7 1.5 2.9 3.2 3.1" stroke="#25f4ee" stroke-width="2.2" fill="none" transform="translate(-0.6,-0.5)"/><path d="M12.3 4.6v8.1a2.9 2.9 0 1 1-2.9-2.9" stroke="#fe2c55" stroke-width="2.2" fill="none" transform="translate(0.6,0.5)"/><path d="M12.3 4.6c.3 1.7 1.5 2.9 3.2 3.1" stroke="#fe2c55" stroke-width="2.2" fill="none" transform="translate(0.6,0.5)"/><path d="M12.3 4.6v8.1a2.9 2.9 0 1 1-2.9-2.9" stroke="#fff" stroke-width="2" fill="none"/><path d="M12.3 4.6c.3 1.7 1.5 2.9 3.2 3.1" stroke="#fff" stroke-width="2" fill="none"/></g></svg>
<div class="a nm" style="left:355px;top:468px">1754352179348 (JP)</div>
<svg class="a" style="left:346.8px;top:496.0px;filter:blur(0.45px)" width="253" height="15" viewBox="0 0 253 15"><rect x="0" y="0" width="252.0" height="14" fill="#fbfbfc"/><rect x="0.0" y="0.0" width="3.6" height="3.6" fill="#e8e9ed"/><rect x="0.0" y="3.5" width="3.6" height="3.6" fill="#e8e9ed"/><rect x="0.0" y="7.0" width="3.6" height="3.6" fill="#e8e9ed"/><rect x="3.5" y="0.0" width="3.6" height="3.6" fill="#babec9"/><rect x="3.5" y="3.5" width="3.6" height="3.6" fill="#babec9"/><rect x="3.5" y="7.0" width="3.6" height="3.6" fill="#d1d4db"/><rect x="3.5" y="10.5" width="3.6" height="3.6" fill="#e8e9ed"/><rect x="7.0" y="0.0" width="3.6" height="3.6" fill="#babec9"/><rect x="7.0" y="3.5" width="3.6" height="3.6" fill="#d1d4db"/><rect x="7.0" y="7.0" width="3.6" height="3.6" fill="#afb3c1"/><rect x="7.0" y="10.5" width="3.6" height="3.6" fill="#e8e9ed"/><rect x="10.5" y="0.0" width="3.6" height="3.6" fill="#f4f4f6"/><rect x="10.5" y="3.5" width="3.6" height="3.6" fill="#c6c9d3"/><rect x="10.5" y="7.0" width="3.6" height="3.6" fill="#d1d4db"/><rect x="10.5" y="10.5" width="3.6" height="3.6" fill="#f4f4f6"/><rect x="14.0" y="0.0" width="3.6" height="3.6" fill="#e8e9ed"/><rect x="14.0" y="3.5" width="3.6" height="3.6" fill="#c6c9d3"/><rect x="14.0" y="7.0" width="3.6" height="3.6" fill="#d1d4db"/><rect x="14.0" y="10.5" width="3.6" height="3.6" fill="#e8e9ed"/><rect x="17.5" y="3.5" width="3.6" height="3.6" fill="#dddfe4"/><rect x="17.5" y="7.0" width="3.6" height="3.6" fill="#e8e9ed"/><rect x="17.5" y="10.5" width="3.6" height="3.6" fill="#f4f4f6"/><rect x="21.0" y="0.0" width="3.6" height="3.6" fill="#babec9"/><rect x="21.0" y="3.5" width="3.6" height="3.6" fill="#c6c9d3"/><rect x="21.0" y="7.0" width="3.6" height="3.6" fill="#babec9"/><rect x="21.0" y="10.5" width="3.6" height="3.6" fill="#f4f4f6"/><rect x="24.5" y="0.0" width="3.6" height="3.6" fill="#babec9"/><rect x="24.5" y="3.5" width="3.6" height="3.6" fill="#c6c9d3"/><rect x="24.5" y="7.0" width="3.6" height="3.6" fill="#babec9"/><rect x="24.5" y="10.5" width="3.6" height="3.6" fill="#f4f4f6"/><rect x="28.0" y="0.0" width="3.6" height="3.6" fill="#e8e9ed"/><rect x="28.0" y="3.5" width="3.6" height="3.6" fill="#afb3c1"/><rect x="28.0" y="7.0" width="3.6" height="3.6" fill="#babec9"/><rect x="28.0" y="10.5" width="3.6" height="3.6" fill="#f4f4f6"/><rect x="31.5" y="0.0" width="3.6" height="3.6" fill="#e8e9ed"/><rect x="31.5" y="3.5" width="3.6" height="3.6" fill="#afb3c1"/><rect x="31.5" y="7.0" width="3.6" height="3.6" fill="#d1d4db"/><rect x="31.5" y="10.5" width="3.6" height="3.6" fill="#e8e9ed"/><rect x="35.0" y="0.0" width="3.6" height="3.6" fill="#f4f4f6"/><rect x="35.0" y="3.5" width="3.6" height="3.6" fill="#d1d4db"/><rect x="35.0" y="7.0" width="3.6" height="3.6" fill="#d1d4db"/><rect x="35.0" y="10.5" width="3.6" height="3.6" fill="#f4f4f6"/><rect x="38.5" y="0.0" width="3.6" height="3.6" fill="#e8e9ed"/><rect x="38.5" y="3.5" width="3.6" height="3.6" fill="#c6c9d3"/><rect x="38.5" y="7.0" width="3.6" height="3.6" fill="#d1d4db"/><rect x="38.5" y="10.5" width="3.6" height="3.6" fill="#f4f4f6"/><rect x="42.0" y="0.0" width="3.6" height="3.6" fill="#d1d4db"/><rect x="42.0" y="3.5" width="3.6" height="3.6" fill="#c6c9d3"/><rect x="42.0" y="7.0" width="3.6" height="3.6" fill="#c6c9d3"/><rect x="42.0" y="10.5" width="3.6" height="3.6" fill="#f4f4f6"/><rect x="45.5" y="0.0" width="3.6" height="3.6" fill="#d1d4db"/><rect x="45.5" y="3.5" width="3.6" height="3.6" fill="#d1d4db"/><rect x="45.5" y="7.0" width="3.6" height="3.6" fill="#c6c9d3"/><rect x="45.5" y="10.5" width="3.6" height="3.6" fill="#f4f4f6"/><rect x="49.0" y="0.0" width="3.6" height="3.6" fill="#afb3c1"/><rect x="49.0" y="3.5" width="3.6" height="3.6" fill="#f4f4f6"/><rect x="49.0" y="7.0" width="3.6" height="3.6" fill="#babec9"/><rect x="49.0" y="10.5" width="3.6" height="3.6" fill="#e8e9ed"/><rect x="52.5" y="0.0" width="3.6" height="3.6" fill="#afb3c1"/><rect x="52.5" y="3.5" width="3.6" height="3.6" fill="#f4f4f6"/><rect x="52.5" y="7.0" width="3.6" height="3.6" fill="#afb3c1"/><rect x="52.5" y="10.5" width="3.6" height="3.6" fill="#f4f4f6"/><rect x="56.0" y="0.0" width="3.6" height="3.6" fill="#f4f4f6"/><rect x="56.0" y="3.5" width="3.6" height="3.6" fill="#d1d4db"/><rect x="56.0" y="7.0" width="3.6" height="3.6" fill="#f4f4f6"/><rect x="56.0" y="10.5" width="3.6" height="3.6" fill="#f4f4f6"/><rect x="59.5" y="0.0" width="3.6" height="3.6" fill="#f4f4f6"/><rect x="59.5" y="3.5" width="3.6" height="3.6" fill="#e8e9ed"/><rect x="59.5" y="7.0" width="3.6" height="3.6" fill="#f4f4f6"/><rect x="59.5" y="10.5" width="3.6" height="3.6" fill="#f4f4f6"/><rect x="66.5" y="0.0" width="3.6" height="3.6" fill="#d1d4db"/><rect x="66.5" y="3.5" width="3.6" height="3.6" fill="#afb3c1"/><rect x="66.5" y="7.0" width="3.6" height="3.6" fill="#afb3c1"/><rect x="66.5" y="10.5" width="3.6" height="3.6" fill="#f4f4f6"/><rect x="70.0" y="0.0" width="3.6" height="3.6" fill="#c6c9d3"/><rect x="70.0" y="3.5" width="3.6" height="3.6" fill="#afb3c1"/><rect x="70.0" y="7.0" width="3.6" height="3.6" fill="#babec9"/><rect x="70.0" y="10.5" width="3.6" height="3.6" fill="#f4f4f6"/><rect x="73.5" y="0.0" width="3.6" height="3.6" fill="#babec9"/><rect x="73.5" y="3.5" width="3.6" height="3.6" fill="#c6c9d3"/><rect x="73.5" y="7.0" width="3.6" height="3.6" fill="#afb3c1"/><rect x="73.5" y="10.5" width="3.6" height="3.6" fill="#f4f4f6"/><rect x="77.0" y="0.0" width="3.6" height="3.6" fill="#d1d4db"/><rect x="77.0" y="3.5" width="3.6" height="3.6" fill="#babec9"/><rect x="77.0" y="7.0" width="3.6" height="3.6" fill="#afb3c1"/><rect x="77.0" y="10.5" width="3.6" height="3.6" fill="#dddfe4"/><rect x="80.5" y="0.0" width="3.6" height="3.6" fill="#babec9"/><rect x="80.5" y="3.5" width="3.6" height="3.6" fill="#d1d4db"/><rect x="80.5" y="7.0" width="3.6" height="3.6" fill="#d1d4db"/><rect x="80.5" y="10.5" width="3.6" height="3.6" fill="#f4f4f6"/><rect x="84.0" y="0.0" width="3.6" height="3.6" fill="#afb3c1"/><rect x="84.0" y="3.5" width="3.6" height="3.6" fill="#babec9"/><rect x="84.0" y="7.0" width="3.6" height="3.6" fill="#a4a9b8"/><rect x="84.0" y="10.5" width="3.6" height="3.6" fill="#f4f4f6"/><rect x="87.5" y="0.0" width="3.6" height="3.6" fill="#dddfe4"/><rect x="87.5" y="3.5" width="3.6" height="3.6" fill="#d1d4db"/><rect x="87.5" y="7.0" width="3.6" height="3.6" fill="#afb3c1"/><rect x="87.5" y="10.5" width="3.6" height="3.6" fill="#f4f4f6"/><rect x="91.0" y="0.0" width="3.6" height="3.6" fill="#c6c9d3"/><rect x="91.0" y="3.5" width="3.6" height="3.6" fill="#dddfe4"/><rect x="91.0" y="7.0" width="3.6" height="3.6" fill="#c6c9d3"/><rect x="91.0" y="10.5" width="3.6" height="3.6" fill="#dddfe4"/><rect x="94.5" y="0.0" width="3.6" height="3.6" fill="#e8e9ed"/><rect x="94.5" y="3.5" width="3.6" height="3.6" fill="#d1d4db"/><rect x="94.5" y="7.0" width="3.6" height="3.6" fill="#d1d4db"/><rect x="94.5" y="10.5" width="3.6" height="3.6" fill="#f4f4f6"/><rect x="98.0" y="0.0" width="3.6" height="3.6" fill="#d1d4db"/><rect x="98.0" y="3.5" width="3.6" height="3.6" fill="#c6c9d3"/><rect x="98.0" y="7.0" width="3.6" height="3.6" fill="#dddfe4"/><rect x="98.0" y="10.5" width="3.6" height="3.6" fill="#f4f4f6"/><rect x="101.5" y="0.0" width="3.6" height="3.6" fill="#d1d4db"/><rect x="101.5" y="3.5" width="3.6" height="3.6" fill="#babec9"/><rect x="101.5" y="7.0" width="3.6" height="3.6" fill="#d1d4db"/><rect x="101.5" y="10.5" width="3.6" height="3.6" fill="#e8e9ed"/><rect x="105.0" y="0.0" width="3.6" height="3.6" fill="#babec9"/><rect x="105.0" y="3.5" width="3.6" height="3.6" fill="#c6c9d3"/><rect x="105.0" y="7.0" width="3.6" height="3.6" fill="#babec9"/><rect x="105.0" y="10.5" width="3.6" height="3.6" fill="#dddfe4"/><rect x="108.5" y="0.0" width="3.6" height="3.6" fill="#afb3c1"/><rect x="108.5" y="3.5" width="3.6" height="3.6" fill="#c6c9d3"/><rect x="108.5" y="7.0" width="3.6" height="3.6" fill="#afb3c1"/><rect x="108.5" y="10.5" width="3.6" height="3.6" fill="#dddfe4"/><rect x="112.0" y="0.0" width="3.6" height="3.6" fill="#afb3c1"/><rect x="112.0" y="3.5" width="3.6" height="3.6" fill="#d1d4db"/><rect x="112.0" y="7.0" width="3.6" height="3.6" fill="#c6c9d3"/><rect x="112.0" y="10.5" width="3.6" height="3.6" fill="#f4f4f6"/><rect x="115.5" y="0.0" width="3.6" height="3.6" fill="#afb3c1"/><rect x="115.5" y="3.5" width="3.6" height="3.6" fill="#d1d4db"/><rect x="115.5" y="7.0" width="3.6" height="3.6" fill="#a4a9b8"/><rect x="115.5" y="10.5" width="3.6" height="3.6" fill="#e8e9ed"/><rect x="119.0" y="0.0" width="3.6" height="3.6" fill="#afb3c1"/><rect x="119.0" y="3.5" width="3.6" height="3.6" fill="#afb3c1"/><rect x="119.0" y="7.0" width="3.6" height="3.6" fill="#afb3c1"/><rect x="119.0" y="10.5" width="3.6" height="3.6" fill="#f4f4f6"/><rect x="122.5" y="0.0" width="3.6" height="3.6" fill="#d1d4db"/><rect x="122.5" y="3.5" width="3.6" height="3.6" fill="#afb3c1"/><rect x="122.5" y="7.0" width="3.6" height="3.6" fill="#c6c9d3"/><rect x="122.5" y="10.5" width="3.6" height="3.6" fill="#e8e9ed"/><rect x="126.0" y="0.0" width="3.6" height="3.6" fill="#e8e9ed"/><rect x="126.0" y="3.5" width="3.6" height="3.6" fill="#d1d4db"/><rect x="126.0" y="7.0" width="3.6" height="3.6" fill="#f4f4f6"/><rect x="126.0" y="10.5" width="3.6" height="3.6" fill="#f4f4f6"/><rect x="129.5" y="0.0" width="3.6" height="3.6" fill="#dddfe4"/><rect x="129.5" y="3.5" width="3.6" height="3.6" fill="#babec9"/><rect x="129.5" y="7.0" width="3.6" height="3.6" fill="#d1d4db"/><rect x="129.5" y="10.5" width="3.6" height="3.6" fill="#f4f4f6"/><rect x="133.0" y="0.0" width="3.6" height="3.6" fill="#c6c9d3"/><rect x="133.0" y="3.5" width="3.6" height="3.6" fill="#babec9"/><rect x="133.0" y="7.0" width="3.6" height="3.6" fill="#babec9"/><rect x="133.0" y="10.5" width="3.6" height="3.6" fill="#f4f4f6"/><rect x="136.5" y="0.0" width="3.6" height="3.6" fill="#dddfe4"/><rect x="136.5" y="3.5" width="3.6" height="3.6" fill="#f4f4f6"/><rect x="136.5" y="7.0" width="3.6" height="3.6" fill="#d1d4db"/><rect x="136.5" y="10.5" width="3.6" height="3.6" fill="#f4f4f6"/><rect x="140.0" y="0.0" width="3.6" height="3.6" fill="#afb3c1"/><rect x="140.0" y="3.5" width="3.6" height="3.6" fill="#c6c9d3"/><rect x="140.0" y="7.0" width="3.6" height="3.6" fill="#afb3c1"/><rect x="140.0" y="10.5" width="3.6" height="3.6" fill="#f4f4f6"/><rect x="143.5" y="0.0" width="3.6" height="3.6" fill="#dddfe4"/><rect x="143.5" y="3.5" width="3.6" height="3.6" fill="#c6c9d3"/><rect x="143.5" y="7.0" width="3.6" height="3.6" fill="#dddfe4"/><rect x="143.5" y="10.5" width="3.6" height="3.6" fill="#f4f4f6"/><rect x="147.0" y="0.0" width="3.6" height="3.6" fill="#dddfe4"/><rect x="147.0" y="3.5" width="3.6" height="3.6" fill="#f4f4f6"/><rect x="147.0" y="7.0" width="3.6" height="3.6" fill="#e8e9ed"/><rect x="147.0" y="10.5" width="3.6" height="3.6" fill="#f4f4f6"/><rect x="150.5" y="0.0" width="3.6" height="3.6" fill="#c6c9d3"/><rect x="150.5" y="3.5" width="3.6" height="3.6" fill="#afb3c1"/><rect x="150.5" y="7.0" width="3.6" height="3.6" fill="#c6c9d3"/><rect x="150.5" y="10.5" width="3.6" height="3.6" fill="#f4f4f6"/><rect x="154.0" y="0.0" width="3.6" height="3.6" fill="#dddfe4"/><rect x="154.0" y="3.5" width="3.6" height="3.6" fill="#c6c9d3"/><rect x="154.0" y="7.0" width="3.6" height="3.6" fill="#c6c9d3"/><rect x="154.0" y="10.5" width="3.6" height="3.6" fill="#e8e9ed"/><rect x="157.5" y="0.0" width="3.6" height="3.6" fill="#babec9"/><rect x="157.5" y="3.5" width="3.6" height="3.6" fill="#babec9"/><rect x="157.5" y="7.0" width="3.6" height="3.6" fill="#babec9"/><rect x="157.5" y="10.5" width="3.6" height="3.6" fill="#dddfe4"/><rect x="161.0" y="0.0" width="3.6" height="3.6" fill="#afb3c1"/><rect x="161.0" y="3.5" width="3.6" height="3.6" fill="#afb3c1"/><rect x="161.0" y="7.0" width="3.6" height="3.6" fill="#dddfe4"/><rect x="161.0" y="10.5" width="3.6" height="3.6" fill="#e8e9ed"/><rect x="164.5" y="0.0" width="3.6" height="3.6" fill="#babec9"/><rect x="164.5" y="3.5" width="3.6" height="3.6" fill="#d1d4db"/><rect x="164.5" y="7.0" width="3.6" height="3.6" fill="#c6c9d3"/><rect x="164.5" y="10.5" width="3.6" height="3.6" fill="#dddfe4"/><rect x="168.0" y="0.0" width="3.6" height="3.6" fill="#afb3c1"/><rect x="168.0" y="3.5" width="3.6" height="3.6" fill="#c6c9d3"/><rect x="168.0" y="7.0" width="3.6" height="3.6" fill="#afb3c1"/><rect x="168.0" y="10.5" width="3.6" height="3.6" fill="#e8e9ed"/><rect x="171.5" y="0.0" width="3.6" height="3.6" fill="#dddfe4"/><rect x="171.5" y="3.5" width="3.6" height="3.6" fill="#babec9"/><rect x="171.5" y="7.0" width="3.6" height="3.6" fill="#afb3c1"/><rect x="171.5" y="10.5" width="3.6" height="3.6" fill="#e8e9ed"/><rect x="175.0" y="0.0" width="3.6" height="3.6" fill="#dddfe4"/><rect x="175.0" y="3.5" width="3.6" height="3.6" fill="#babec9"/><rect x="175.0" y="7.0" width="3.6" height="3.6" fill="#afb3c1"/><rect x="175.0" y="10.5" width="3.6" height="3.6" fill="#f4f4f6"/><rect x="178.5" y="0.0" width="3.6" height="3.6" fill="#dddfe4"/><rect x="178.5" y="3.5" width="3.6" height="3.6" fill="#dddfe4"/><rect x="178.5" y="7.0" width="3.6" height="3.6" fill="#d1d4db"/><rect x="178.5" y="10.5" width="3.6" height="3.6" fill="#f4f4f6"/><rect x="182.0" y="0.0" width="3.6" height="3.6" fill="#c6c9d3"/><rect x="182.0" y="3.5" width="3.6" height="3.6" fill="#afb3c1"/><rect x="182.0" y="7.0" width="3.6" height="3.6" fill="#a4a9b8"/><rect x="182.0" y="10.5" width="3.6" height="3.6" fill="#e8e9ed"/><rect x="185.5" y="0.0" width="3.6" height="3.6" fill="#babec9"/><rect x="185.5" y="3.5" width="3.6" height="3.6" fill="#dddfe4"/><rect x="185.5" y="7.0" width="3.6" height="3.6" fill="#afb3c1"/><rect x="185.5" y="10.5" width="3.6" height="3.6" fill="#f4f4f6"/><rect x="189.0" y="0.0" width="3.6" height="3.6" fill="#dddfe4"/><rect x="189.0" y="3.5" width="3.6" height="3.6" fill="#c6c9d3"/><rect x="189.0" y="7.0" width="3.6" height="3.6" fill="#c6c9d3"/><rect x="189.0" y="10.5" width="3.6" height="3.6" fill="#dddfe4"/><rect x="192.5" y="0.0" width="3.6" height="3.6" fill="#c6c9d3"/><rect x="192.5" y="3.5" width="3.6" height="3.6" fill="#afb3c1"/><rect x="192.5" y="7.0" width="3.6" height="3.6" fill="#afb3c1"/><rect x="192.5" y="10.5" width="3.6" height="3.6" fill="#e8e9ed"/><rect x="196.0" y="0.0" width="3.6" height="3.6" fill="#d1d4db"/><rect x="196.0" y="3.5" width="3.6" height="3.6" fill="#c6c9d3"/><rect x="196.0" y="7.0" width="3.6" height="3.6" fill="#d1d4db"/><rect x="196.0" y="10.5" width="3.6" height="3.6" fill="#e8e9ed"/><rect x="199.5" y="0.0" width="3.6" height="3.6" fill="#afb3c1"/><rect x="199.5" y="3.5" width="3.6" height="3.6" fill="#c6c9d3"/><rect x="199.5" y="7.0" width="3.6" height="3.6" fill="#c6c9d3"/><rect x="199.5" y="10.5" width="3.6" height="3.6" fill="#dddfe4"/><rect x="203.0" y="0.0" width="3.6" height="3.6" fill="#dddfe4"/><rect x="203.0" y="3.5" width="3.6" height="3.6" fill="#dddfe4"/><rect x="203.0" y="7.0" width="3.6" height="3.6" fill="#afb3c1"/><rect x="203.0" y="10.5" width="3.6" height="3.6" fill="#f4f4f6"/><rect x="206.5" y="0.0" width="3.6" height="3.6" fill="#c6c9d3"/><rect x="206.5" y="3.5" width="3.6" height="3.6" fill="#afb3c1"/><rect x="206.5" y="7.0" width="3.6" height="3.6" fill="#d1d4db"/><rect x="206.5" y="10.5" width="3.6" height="3.6" fill="#e8e9ed"/><rect x="210.0" y="0.0" width="3.6" height="3.6" fill="#f4f4f6"/><rect x="210.0" y="3.5" width="3.6" height="3.6" fill="#d1d4db"/><rect x="210.0" y="7.0" width="3.6" height="3.6" fill="#f4f4f6"/><rect x="213.5" y="0.0" width="3.6" height="3.6" fill="#afb3c1"/><rect x="213.5" y="3.5" width="3.6" height="3.6" fill="#c6c9d3"/><rect x="213.5" y="7.0" width="3.6" height="3.6" fill="#c6c9d3"/><rect x="213.5" y="10.5" width="3.6" height="3.6" fill="#f4f4f6"/><rect x="217.0" y="0.0" width="3.6" height="3.6" fill="#babec9"/><rect x="217.0" y="3.5" width="3.6" height="3.6" fill="#d1d4db"/><rect x="217.0" y="7.0" width="3.6" height="3.6" fill="#dddfe4"/><rect x="217.0" y="10.5" width="3.6" height="3.6" fill="#e8e9ed"/><rect x="220.5" y="0.0" width="3.6" height="3.6" fill="#d1d4db"/><rect x="220.5" y="3.5" width="3.6" height="3.6" fill="#afb3c1"/><rect x="220.5" y="7.0" width="3.6" height="3.6" fill="#babec9"/><rect x="220.5" y="10.5" width="3.6" height="3.6" fill="#e8e9ed"/><rect x="224.0" y="0.0" width="3.6" height="3.6" fill="#d1d4db"/><rect x="224.0" y="3.5" width="3.6" height="3.6" fill="#dddfe4"/><rect x="224.0" y="7.0" width="3.6" height="3.6" fill="#dddfe4"/><rect x="224.0" y="10.5" width="3.6" height="3.6" fill="#f4f4f6"/><rect x="227.5" y="0.0" width="3.6" height="3.6" fill="#c6c9d3"/><rect x="227.5" y="3.5" width="3.6" height="3.6" fill="#afb3c1"/><rect x="227.5" y="7.0" width="3.6" height="3.6" fill="#d1d4db"/><rect x="227.5" y="10.5" width="3.6" height="3.6" fill="#e8e9ed"/><rect x="231.0" y="0.0" width="3.6" height="3.6" fill="#dddfe4"/><rect x="231.0" y="3.5" width="3.6" height="3.6" fill="#f4f4f6"/><rect x="231.0" y="7.0" width="3.6" height="3.6" fill="#dddfe4"/><rect x="234.5" y="0.0" width="3.6" height="3.6" fill="#babec9"/><rect x="234.5" y="3.5" width="3.6" height="3.6" fill="#c6c9d3"/><rect x="234.5" y="7.0" width="3.6" height="3.6" fill="#afb3c1"/><rect x="234.5" y="10.5" width="3.6" height="3.6" fill="#e8e9ed"/><rect x="238.0" y="0.0" width="3.6" height="3.6" fill="#babec9"/><rect x="238.0" y="3.5" width="3.6" height="3.6" fill="#c6c9d3"/><rect x="238.0" y="7.0" width="3.6" height="3.6" fill="#a4a9b8"/><rect x="238.0" y="10.5" width="3.6" height="3.6" fill="#dddfe4"/><rect x="241.5" y="0.0" width="3.6" height="3.6" fill="#dddfe4"/><rect x="241.5" y="3.5" width="3.6" height="3.6" fill="#d1d4db"/><rect x="241.5" y="7.0" width="3.6" height="3.6" fill="#f4f4f6"/><rect x="241.5" y="10.5" width="3.6" height="3.6" fill="#f4f4f6"/><rect x="245.0" y="0.0" width="3.6" height="3.6" fill="#d1d4db"/><rect x="245.0" y="3.5" width="3.6" height="3.6" fill="#d1d4db"/><rect x="245.0" y="7.0" width="3.6" height="3.6" fill="#dddfe4"/><rect x="245.0" y="10.5" width="3.6" height="3.6" fill="#dddfe4"/><rect x="248.5" y="0.0" width="3.6" height="3.6" fill="#afb3c1"/><rect x="248.5" y="3.5" width="3.6" height="3.6" fill="#afb3c1"/><rect x="248.5" y="7.0" width="3.6" height="3.6" fill="#babec9"/><rect x="248.5" y="10.5" width="3.6" height="3.6" fill="#f4f4f6"/></svg>
<div class="a dt" style="left:715px;top:488px">2025-07-22 18:40:56</div>
<div class="a dt" style="left:913px;top:488px">2025-10-20 18:40:46</div>
<svg class="a" style="left:1227px;top:485px" width="24" height="22" viewBox="0 0 24 22"><path d="M4.3 15.9V11.2L14.5 1.6L18.7 6.2L8.7 15.9Z M12.5 15.9H18.9" stroke="#2b3140" stroke-width="1.5" fill="none" stroke-linejoin="round"/></svg>
<svg class="a" style="left:1267.7px;top:482.5px" width="24" height="22" viewBox="0 0 24 22"><g stroke="#2b3140" stroke-width="1.5" fill="none" stroke-linecap="round"><path d="M7.1 5.1A7.8 7.8 0 0 1 19.6 13"/><path d="M7.1 5.1L8.1 8.1"/><path d="M16.9 16.9A7.8 7.8 0 0 1 4.4 9"/><path d="M16.9 16.9L15.9 13.9"/></g></svg>
<svg class="a" style="left:1313px;top:485px" width="20" height="22" viewBox="0 0 20 22"><g stroke="#e5572f" stroke-width="1.5" fill="none" stroke-linejoin="round"><path d="M.7 4.6H15.8 M5 4.4C5 2.8 6.3 1.6 8.1 1.6S11.6 2.8 11.6 4.4 M2.1 4.8L3.4 17.6H13.3L14.6 4.8"/></g></svg>
<svg class="a" style="left:329px;top:553.5px" width="20" height="23" viewBox="0 0 20 23"><path d="M5.2 5.8V5.2C5.2 2.8 7 .9 9.6.9S14.1 2.8 14.1 5.2V5.8" stroke="#e5572f" stroke-width="1.6" fill="none"/><path d="M.6 5.4H19L18.2 21.2C18.1 21.9 17.6 22.2 17 22.2H2.4C1.8 22.2 1.3 21.9 1.3 21.2Z" fill="#e5592f"/><text x="9.9" y="19.3" text-anchor="middle" font-family="Liberation Sans" font-size="13" fill="#fff">S</text></svg>
<div class="a nm" style="left:355px;top:556px">1753142583524 (TW)</div>
<svg class="a" style="left:346.8px;top:584.0px;filter:blur(0.45px)" width="144" height="15" viewBox="0 0 144 15"><rect x="0" y="0" width="143.5" height="14" fill="#fbfbfc"/><rect x="0.0" y="0.0" width="3.6" height="3.6" fill="#e8e9ed"/><rect x="0.0" y="3.5" width="3.6" height="3.6" fill="#e8e9ed"/><rect x="0.0" y="7.0" width="3.6" height="3.6" fill="#e8e9ed"/><rect x="3.5" y="0.0" width="3.6" height="3.6" fill="#babec9"/><rect x="3.5" y="3.5" width="3.6" height="3.6" fill="#babec9"/><rect x="3.5" y="7.0" width="3.6" height="3.6" fill="#d1d4db"/><rect x="3.5" y="10.5" width="3.6" height="3.6" fill="#e8e9ed"/><rect x="7.0" y="0.0" width="3.6" height="3.6" fill="#babec9"/><rect x="7.0" y="3.5" width="3.6" height="3.6" fill="#d1d4db"/><rect x="7.0" y="7.0" width="3.6" height="3.6" fill="#afb3c1"/><rect x="7.0" y="10.5" width="3.6" height="3.6" fill="#e8e9ed"/><rect x="10.5" y="0.0" width="3.6" height="3.6" fill="#f4f4f6"/><rect x="10.5" y="3.5" width="3.6" height="3.6" fill="#c6c9d3"/><rect x="10.5" y="7.0" width="3.6" height="3.6" fill="#d1d4db"/><rect x="10.5" y="10.5" width="3.6" height="3.6" fill="#f4f4f6"/><rect x="14.0" y="0.0" width="3.6" height="3.6" fill="#e8e9ed"/><rect x="14.0" y="3.5" width="3.6" height="3.6" fill="#c6c9d3"/><rect x="14.0" y="7.0" width="3.6" height="3.6" fill="#d1d4db"/><rect x="14.0" y="10.5" width="3.6" height="3.6" fill="#e8e9ed"/><rect x="17.5" y="3.5" width="3.6" height="3.6" fill="#dddfe4"/><rect x="17.5" y="7.0" width="3.6" height="3.6" fill="#e8e9ed"/><rect x="17.5" y="10.5" width="3.6" height="3.6" fill="#f4f4f6"/><rect x="21.0" y="0.0" width="3.6" height="3.6" fill="#babec9"/><rect x="21.0" y="3.5" width="3.6" height="3.6" fill="#c6c9d3"/><rect x="21.0" y="7.0" width="3.6" height="3.6" fill="#babec9"/><rect x="21.0" y="10.5" width="3.6" height="3.6" fill="#f4f4f6"/><rect x="24.5" y="0.0" width="3.6" height="3.6" fill="#babec9"/><rect x="24.5" y="3.5" width="3.6" height="3.6" fill="#c6c9d3"/><rect x="24.5" y="7.0" width="3.6" height="3.6" fill="#babec9"/><rect x="24.5" y="10.5" width="3.6" height="3.6" fill="#f4f4f6"/><rect x="28.0" y="0.0" width="3.6" height="3.6" fill="#e8e9ed"/><rect x="28.0" y="3.5" width="3.6" height="3.6" fill="#afb3c1"/><rect x="28.0" y="7.0" width="3.6" height="3.6" fill="#babec9"/><rect x="28.0" y="10.5" width="3.6" height="3.6" fill="#f4f4f6"/><rect x="31.5" y="0.0" width="3.6" height="3.6" fill="#e8e9ed"/><rect x="31.5" y="3.5" width="3.6" height="3.6" fill="#afb3c1"/><rect x="31.5" y="7.0" width="3.6" height="3.6" fill="#d1d4db"/><rect x="31.5" y="10.5" width="3.6" height="3.6" fill="#e8e9ed"/><rect x="35.0" y="0.0" width="3.6" height="3.6" fill="#f4f4f6"/><rect x="35.0" y="3.5" width="3.6" height="3.6" fill="#d1d4db"/><rect x="35.0" y="7.0" width="3.6" height="3.6" fill="#d1d4db"/><rect x="35.0" y="10.5" width="3.6" height="3.6" fill="#f4f4f6"/><rect x="38.5" y="0.0" width="3.6" height="3.6" fill="#e8e9ed"/><rect x="38.5" y="3.5" width="3.6" height="3.6" fill="#c6c9d3"/><rect x="38.5" y="7.0" width="3.6" height="3.6" fill="#d1d4db"/><rect x="38.5" y="10.5" width="3.6" height="3.6" fill="#f4f4f6"/><rect x="42.0" y="0.0" width="3.6" height="3.6" fill="#d1d4db"/><rect x="42.0" y="3.5" width="3.6" height="3.6" fill="#c6c9d3"/><rect x="42.0" y="7.0" width="3.6" height="3.6" fill="#c6c9d3"/><rect x="42.0" y="10.5" width="3.6" height="3.6" fill="#f4f4f6"/><rect x="45.5" y="0.0" width="3.6" height="3.6" fill="#d1d4db"/><rect x="45.5" y="3.5" width="3.6" height="3.6" fill="#d1d4db"/><rect x="45.5" y="7.0" width="3.6" height="3.6" fill="#c6c9d3"/><rect x="45.5" y="10.5" width="3.6" height="3.6" fill="#f4f4f6"/><rect x="49.0" y="0.0" width="3.6" height="3.6" fill="#afb3c1"/><rect x="49.0" y="3.5" width="3.6" height="3.6" fill="#f4f4f6"/><rect x="49.0" y="7.0" width="3.6" height="3.6" fill="#babec9"/><rect x="49.0" y="10.5" width="3.6" height="3.6" fill="#e8e9ed"/><rect x="52.5" y="0.0" width="3.6" height="3.6" fill="#afb3c1"/><rect x="52.5" y="3.5" width="3.6" height="3.6" fill="#f4f4f6"/><rect x="52.5" y="7.0" width="3.6" height="3.6" fill="#afb3c1"/><rect x="52.5" y="10.5" width="3.6" height="3.6" fill="#f4f4f6"/><rect x="56.0" y="0.0" width="3.6" height="3.6" fill="#f4f4f6"/><rect x="56.0" y="3.5" width="3.6" height="3.6" fill="#d1d4db"/><rect x="56.0" y="7.0" width="3.6" height="3.6" fill="#f4f4f6"/><rect x="56.0" y="10.5" width="3.6" height="3.6" fill="#f4f4f6"/><rect x="59.5" y="0.0" width="3.6" height="3.6" fill="#f4f4f6"/><rect x="59.5" y="3.5" width="3.6" height="3.6" fill="#e8e9ed"/><rect x="59.5" y="7.0" width="3.6" height="3.6" fill="#f4f4f6"/><rect x="59.5" y="10.5" width="3.6" height="3.6" fill="#f4f4f6"/><rect x="66.5" y="0.0" width="3.6" height="3.6" fill="#dddfe4"/><rect x="66.5" y="3.5" width="3.6" height="3.6" fill="#babec9"/><rect x="66.5" y="7.0" width="3.6" height="3.6" fill="#a4a9b8"/><rect x="66.5" y="10.5" width="3.6" height="3.6" fill="#e8e9ed"/><rect x="70.0" y="0.0" width="3.6" height="3.6" fill="#afb3c1"/><rect x="70.0" y="3.5" width="3.6" height="3.6" fill="#c6c9d3"/><rect x="70.0" y="7.0" width="3.6" height="3.6" fill="#d1d4db"/><rect x="70.0" y="10.5" width="3.6" height="3.6" fill="#f4f4f6"/><rect x="73.5" y="0.0" width="3.6" height="3.6" fill="#c6c9d3"/><rect x="73.5" y="3.5" width="3.6" height="3.6" fill="#dddfe4"/><rect x="73.5" y="7.0" width="3.6" height="3.6" fill="#d1d4db"/><rect x="73.5" y="10.5" width="3.6" height="3.6" fill="#f4f4f6"/><rect x="77.0" y="0.0" width="3.6" height="3.6" fill="#dddfe4"/><rect x="77.0" y="3.5" width="3.6" height="3.6" fill="#afb3c1"/><rect x="77.0" y="7.0" width="3.6" height="3.6" fill="#d1d4db"/><rect x="77.0" y="10.5" width="3.6" height="3.6" fill="#dddfe4"/><rect x="80.5" y="0.0" width="3.6" height="3.6" fill="#afb3c1"/><rect x="80.5" y="3.5" width="3.6" height="3.6" fill="#dddfe4"/><rect x="80.5" y="7.0" width="3.6" height="3.6" fill="#dddfe4"/><rect x="80.5" y="10.5" width="3.6" height="3.6" fill="#dddfe4"/><rect x="84.0" y="0.0" width="3.6" height="3.6" fill="#d1d4db"/><rect x="84.0" y="3.5" width="3.6" height="3.6" fill="#afb3c1"/><rect x="84.0" y="7.0" width="3.6" height="3.6" fill="#c6c9d3"/><rect x="84.0" y="10.5" width="3.6" height="3.6" fill="#f4f4f6"/><rect x="87.5" y="0.0" width="3.6" height="3.6" fill="#dddfe4"/><rect x="87.5" y="3.5" width="3.6" height="3.6" fill="#afb3c1"/><rect x="87.5" y="7.0" width="3.6" height="3.6" fill="#afb3c1"/><rect x="87.5" y="10.5" width="3.6" height="3.6" fill="#dddfe4"/><rect x="91.0" y="0.0" width="3.6" height="3.6" fill="#dddfe4"/><rect x="91.0" y="3.5" width="3.6" height="3.6" fill="#afb3c1"/><rect x="91.0" y="7.0" width="3.6" height="3.6" fill="#dddfe4"/><rect x="91.0" y="10.5" width="3.6" height="3.6" fill="#e8e9ed"/><rect x="94.5" y="0.0" width="3.6" height="3.6" fill="#dddfe4"/><rect x="94.5" y="3.5" width="3.6" height="3.6" fill="#d1d4db"/><rect x="94.5" y="7.0" width="3.6" height="3.6" fill="#f4f4f6"/><rect x="94.5" y="10.5" width="3.6" height="3.6" fill="#f4f4f6"/><rect x="98.0" y="0.0" width="3.6" height="3.6" fill="#d1d4db"/><rect x="98.0" y="3.5" width="3.6" height="3.6" fill="#d1d4db"/><rect x="98.0" y="7.0" width="3.6" height="3.6" fill="#dddfe4"/><rect x="98.0" y="10.5" width="3.6" height="3.6" fill="#f4f4f6"/><rect x="101.5" y="0.0" width="3.6" height="3.6" fill="#d1d4db"/><rect x="101.5" y="3.5" width="3.6" height="3.6" fill="#d1d4db"/><rect x="101.5" y="7.0" width="3.6" height="3.6" fill="#c6c9d3"/><rect x="101.5" y="10.5" width="3.6" height="3.6" fill="#f4f4f6"/><rect x="105.0" y="0.0" width="3.6" height="3.6" fill="#dddfe4"/><rect x="105.0" y="3.5" width="3.6" height="3.6" fill="#babec9"/><rect x="105.0" y="7.0" width="3.6" height="3.6" fill="#a4a9b8"/><rect x="105.0" y="10.5" width="3.6" height="3.6" fill="#dddfe4"/><rect x="108.5" y="0.0" width="3.6" height="3.6" fill="#dddfe4"/><rect x="108.5" y="3.5" width="3.6" height="3.6" fill="#c6c9d3"/><rect x="108.5" y="7.0" width="3.6" height="3.6" fill="#d1d4db"/><rect x="108.5" y="10.5" width="3.6" height="3.6" fill="#e8e9ed"/><rect x="112.0" y="0.0" width="3.6" height="3.6" fill="#afb3c1"/><rect x="112.0" y="3.5" width="3.6" height="3.6" fill="#afb3c1"/><rect x="112.0" y="7.0" width="3.6" height="3.6" fill="#afb3c1"/><rect x="112.0" y="10.5" width="3.6" height="3.6" fill="#dddfe4"/><rect x="115.5" y="0.0" width="3.6" height="3.6" fill="#e8e9ed"/><rect x="115.5" y="3.5" width="3.6" height="3.6" fill="#f4f4f6"/><rect x="115.5" y="7.0" width="3.6" height="3.6" fill="#f4f4f6"/><rect x="119.0" y="0.0" width="3.6" height="3.6" fill="#dddfe4"/><rect x="119.0" y="3.5" width="3.6" height="3.6" fill="#dddfe4"/><rect x="119.0" y="7.0" width="3.6" height="3.6" fill="#dddfe4"/><rect x="119.0" y="10.5" width="3.6" height="3.6" fill="#f4f4f6"/><rect x="122.5" y="0.0" width="3.6" height="3.6" fill="#babec9"/><rect x="122.5" y="3.5" width="3.6" height="3.6" fill="#dddfe4"/><rect x="122.5" y="7.0" width="3.6" height="3.6" fill="#a4a9b8"/><rect x="122.5" y="10.5" width="3.6" height="3.6" fill="#f4f4f6"/><rect x="126.0" y="0.0" width="3.6" height="3.6" fill="#e8e9ed"/><rect x="126.0" y="3.5" width="3.6" height="3.6" fill="#dddfe4"/><rect x="126.0" y="7.0" width="3.6" height="3.6" fill="#e8e9ed"/><rect x="126.0" y="10.5" width="3.6" height="3.6" fill="#f4f4f6"/><rect x="129.5" y="0.0" width="3.6" height="3.6" fill="#dddfe4"/><rect x="129.5" y="3.5" width="3.6" height="3.6" fill="#c6c9d3"/><rect x="129.5" y="7.0" width="3.6" height="3.6" fill="#babec9"/><rect x="129.5" y="10.5" width="3.6" height="3.6" fill="#dddfe4"/><rect x="133.0" y="0.0" width="3.6" height="3.6" fill="#afb3c1"/><rect x="133.0" y="3.5" width="3.6" height="3.6" fill="#c6c9d3"/><rect x="133.0" y="7.0" width="3.6" height="3.6" fill="#c6c9d3"/><rect x="133.0" y="10.5" width="3.6" height="3.6" fill="#e8e9ed"/><rect x="136.5" y="0.0" width="3.6" height="3.6" fill="#e8e9ed"/><rect x="136.5" y="3.5" width="3.6" height="3.6" fill="#d1d4db"/><rect x="136.5" y="7.0" width="3.6" height="3.6" fill="#f4f4f6"/><rect x="140.0" y="0.0" width="3.6" height="3.6" fill="#afb3c1"/><rect x="140.0" y="3.5" width="3.6" height="3.6" fill="#dddfe4"/><rect x="140.0" y="7.0" width="3.6" height="3.6" fill="#a4a9b8"/><rect x="140.0" y="10.5" width="3.6" height="3.6" fill="#dddfe4"/></svg>
<svg class="a" style="left:670px;top:556px" width="20" height="20" viewBox="0 0 20 20"><path d="M8.8 4.5H4.5V14.5H14.5V10 M10.2 8.4L16 3 M12.4 2.5H16V6.2" stroke="#2b3140" stroke-width="1.4" fill="none" stroke-linecap="round" stroke-linejoin="round"/></svg>
<div class="a dt" style="left:715px;top:576px">2025-07-10 15:26:49</div>
<div class="a dt" style="left:913px;top:576px">2026-07-10 23:59:59</div>
<svg class="a" style="left:1227px;top:573px" width="24" height="22" viewBox="0 0 24 22"><path d="M4.3 15.9V11.2L14.5 1.6L18.7 6.2L8.7 15.9Z M12.5 15.9H18.9" stroke="#2b3140" stroke-width="1.5" fill="none" stroke-linejoin="round"/></svg>
<svg class="a" style="left:1267.7px;top:570.5px" width="24" height="22" viewBox="0 0 24 22"><g stroke="#2b3140" stroke-width="1.5" fill="none" stroke-linecap="round"><path d="M7.1 5.1A7.8 7.8 0 0 1 19.6 13"/><path d="M7.1 5.1L8.1 8.1"/><path d="M16.9 16.9A7.8 7.8 0 0 1 4.4 9"/><path d="M16.9 16.9L15.9 13.9"/></g></svg>
<svg class="a" style="left:1313px;top:573px" width="20" height="22" viewBox="0 0 20 22"><g stroke="#e5572f" stroke-width="1.5" fill="none" stroke-linejoin="round"><path d="M.7 4.6H15.8 M5 4.4C5 2.8 6.3 1.6 8.1 1.6S11.6 2.8 11.6 4.4 M2.1 4.8L3.4 17.6H13.3L14.6 4.8"/></g></svg>
<svg class="a" style="left:330px;top:646px" width="17" height="14" viewBox="0 0 17 14"><defs><linearGradient id="lz" x1="0" y1="0" x2="1" y2="0"><stop offset="0" stop-color="#f39a2c"/><stop offset="0.5" stop-color="#f0752c"/><stop offset="0.52" stop-color="#f04a6a"/><stop offset="1" stop-color="#e82fe0"/></linearGradient></defs><path d="M1 2.5L4.3 .8L8.5 3.2L12.7 .8L16 2.5V8.4L8.5 12.9L1 8.4Z" fill="url(#lz)" stroke="url(#lz)" stroke-width="0.8" stroke-linejoin="round"/></svg>
<div class="a nm" style="left:355px;top:644px">1749556851661 (VN)</div>
<svg class="a" style="left:346.8px;top:672.0px;filter:blur(0.45px)" width="183" height="15" viewBox="0 0 183 15"><rect x="0" y="0" width="182.0" height="14" fill="#fbfbfc"/><rect x="0.0" y="0.0" width="3.6" height="3.6" fill="#e8e9ed"/><rect x="0.0" y="3.5" width="3.6" height="3.6" fill="#e8e9ed"/><rect x="0.0" y="7.0" width="3.6" height="3.6" fill="#e8e9ed"/><rect x="3.5" y="0.0" width="3.6" height="3.6" fill="#babec9"/><rect x="3.5" y="3.5" width="3.6" height="3.6" fill="#babec9"/><rect x="3.5" y="7.0" width="3.6" height="3.6" fill="#d1d4db"/><rect x="3.5" y="10.5" width="3.6" height="3.6" fill="#e8e9ed"/><rect x="7.0" y="0.0" width="3.6" height="3.6" fill="#babec9"/><rect x="7.0" y="3.5" width="3.6" height="3.6" fill="#d1d4db"/><rect x="7.0" y="7.0" width="3.6" height="3.6" fill="#afb3c1"/><rect x="7.0" y="10.5" width="3.6" height="3.6" fill="#e8e9ed"/><rect x="10.5" y="0.0" width="3.6" height="3.6" fill="#f4f4f6"/><rect x="10.5" y="3.5" width="3.6" height="3.6" fill="#c6c9d3"/><rect x="10.5" y="7.0" width="3.6" height="3.6" fill="#d1d4db"/><rect x="10.5" y="10.5" width="3.6" height="3.6" fill="#f4f4f6"/><rect x="14.0" y="0.0" width="3.6" height="3.6" fill="#e8e9ed"/><rect x="14.0" y="3.5" width="3.6" height="3.6" fill="#c6c9d3"/><rect x="14.0" y="7.0" width="3.6" height="3.6" fill="#d1d4db"/><rect x="14.0" y="10.5" width="3.6" height="3.6" fill="#e8e9ed"/><rect x="17.5" y="3.5" width="3.6" height="3.6" fill="#dddfe4"/><rect x="17.5" y="7.0" width="3.6" height="3.6" fill="#e8e9ed"/><rect x="17.5" y="10.5" width="3.6" height="3.6" fill="#f4f4f6"/><rect x="21.0" y="0.0" width="3.6" height="3.6" fill="#babec9"/><rect x="21.0" y="3.5" width="3.6" height="3.6" fill="#c6c9d3"/><rect x="21.0" y="7.0" width="3.6" height="3.6" fill="#babec9"/><rect x="21.0" y="10.5" width="3.6" height="3.6" fill="#f4f4f6"/><rect x="24.5" y="0.0" width="3.6" height="3.6" fill="#babec9"/><rect x="24.5" y="3.5" width="3.6" height="3.6" fill="#c6c9d3"/><rect x="24.5" y="7.0" width="3.6" height="3.6" fill="#babec9"/><rect x="24.5" y="10.5" width="3.6" height="3.6" fill="#f4f4f6"/><rect x="28.0" y="0.0" width="3.6" height="3.6" fill="#e8e9ed"/><rect x="28.0" y="3.5" width="3.6" height="3.6" fill="#afb3c1"/><rect x="28.0" y="7.0" width="3.6" height="3.6" fill="#babec9"/><rect x="28.0" y="10.5" width="3.6" height="3.6" fill="#f4f4f6"/><rect x="31.5" y="0.0" width="3.6" height="3.6" fill="#e8e9ed"/><rect x="31.5" y="3.5" width="3.6" height="3.6" fill="#afb3c1"/><rect x="31.5" y="7.0" width="3.6" height="3.6" fill="#d1d4db"/><rect x="31.5" y="10.5" width="3.6" height="3.6" fill="#e8e9ed"/><rect x="35.0" y="0.0" width="3.6" height="3.6" fill="#f4f4f6"/><rect x="35.0" y="3.5" width="3.6" height="3.6" fill="#d1d4db"/><rect x="35.0" y="7.0" width="3.6" height="3.6" fill="#d1d4db"/><rect x="35.0" y="10.5" width="3.6" height="3.6" fill="#f4f4f6"/><rect x="38.5" y="0.0" width="3.6" height="3.6" fill="#e8e9ed"/><rect x="38.5" y="3.5" width="3.6" height="3.6" fill="#c6c9d3"/><rect x="38.5" y="7.0" width="3.6" height="3.6" fill="#d1d4db"/><rect x="38.5" y="10.5" width="3.6" height="3.6" fill="#f4f4f6"/><rect x="42.0" y="0.0" width="3.6" height="3.6" fill="#d1d4db"/><rect x="42.0" y="3.5" width="3.6" height="3.6" fill="#c6c9d3"/><rect x="42.0" y="7.0" width="3.6" height="3.6" fill="#c6c9d3"/><rect x="42.0" y="10.5" width="3.6" height="3.6" fill="#f4f4f6"/><rect x="45.5" y="0.0" width="3.6" height="3.6" fill="#d1d4db"/><rect x="45.5" y="3.5" width="3.6" height="3.6" fill="#d1d4db"/><rect x="45.5" y="7.0" width="3.6" height="3.6" fill="#c6c9d3"/><rect x="45.5" y="10.5" width="3.6" height="3.6" fill="#f4f4f6"/><rect x="49.0" y="0.0" width="3.6" height="3.6" fill="#afb3c1"/><rect x="49.0" y="3.5" width="3.6" height="3.6" fill="#f4f4f6"/><rect x="49.0" y="7.0" width="3.6" height="3.6" fill="#babec9"/><rect x="49.0" y="10.5" width="3.6" height="3.6" fill="#e8e9ed"/><rect x="52.5" y="0.0" width="3.6" height="3.6" fill="#afb3c1"/><rect x="52.5" y="3.5" width="3.6" height="3.6" fill="#f4f4f6"/><rect x="52.5" y="7.0" width="3.6" height="3.6" fill="#afb3c1"/><rect x="52.5" y="10.5" width="3.6" height="3.6" fill="#f4f4f6"/><rect x="56.0" y="0.0" width="3.6" height="3.6" fill="#f4f4f6"/><rect x="56.0" y="3.5" width="3.6" height="3.6" fill="#d1d4db"/><rect x="56.0" y="7.0" width="3.6" height="3.6" fill="#f4f4f6"/><rect x="56.0" y="10.5" width="3.6" height="3.6" fill="#f4f4f6"/><rect x="59.5" y="0.0" width="3.6" height="3.6" fill="#f4f4f6"/><rect x="59.5" y="3.5" width="3.6" height="3.6" fill="#e8e9ed"/><rect x="59.5" y="7.0" width="3.6" height="3.6" fill="#f4f4f6"/><rect x="59.5" y="10.5" width="3.6" height="3.6" fill="#f4f4f6"/><rect x="66.5" y="0.0" width="3.6" height="3.6" fill="#dddfe4"/><rect x="66.5" y="3.5" width="3.6" height="3.6" fill="#afb3c1"/><rect x="66.5" y="7.0" width="3.6" height="3.6" fill="#d1d4db"/><rect x="66.5" y="10.5" width="3.6" height="3.6" fill="#f4f4f6"/><rect x="70.0" y="0.0" width="3.6" height="3.6" fill="#c6c9d3"/><rect x="70.0" y="3.5" width="3.6" height="3.6" fill="#babec9"/><rect x="70.0" y="7.0" width="3.6" height="3.6" fill="#afb3c1"/><rect x="70.0" y="10.5" width="3.6" height="3.6" fill="#dddfe4"/><rect x="73.5" y="0.0" width="3.6" height="3.6" fill="#dddfe4"/><rect x="73.5" y="3.5" width="3.6" height="3.6" fill="#afb3c1"/><rect x="73.5" y="7.0" width="3.6" height="3.6" fill="#babec9"/><rect x="73.5" y="10.5" width="3.6" height="3.6" fill="#f4f4f6"/><rect x="77.0" y="0.0" width="3.6" height="3.6" fill="#c6c9d3"/><rect x="77.0" y="3.5" width="3.6" height="3.6" fill="#babec9"/><rect x="77.0" y="7.0" width="3.6" height="3.6" fill="#a4a9b8"/><rect x="77.0" y="10.5" width="3.6" height="3.6" fill="#e8e9ed"/><rect x="80.5" y="0.0" width="3.6" height="3.6" fill="#babec9"/><rect x="80.5" y="3.5" width="3.6" height="3.6" fill="#babec9"/><rect x="80.5" y="7.0" width="3.6" height="3.6" fill="#babec9"/><rect x="80.5" y="10.5" width="3.6" height="3.6" fill="#f4f4f6"/><rect x="84.0" y="0.0" width="3.6" height="3.6" fill="#dddfe4"/><rect x="84.0" y="3.5" width="3.6" height="3.6" fill="#dddfe4"/><rect x="84.0" y="7.0" width="3.6" height="3.6" fill="#f4f4f6"/><rect x="84.0" y="10.5" width="3.6" height="3.6" fill="#f4f4f6"/><rect x="87.5" y="0.0" width="3.6" height="3.6" fill="#d1d4db"/><rect x="87.5" y="3.5" width="3.6" height="3.6" fill="#babec9"/><rect x="87.5" y="7.0" width="3.6" height="3.6" fill="#d1d4db"/><rect x="87.5" y="10.5" width="3.6" height="3.6" fill="#f4f4f6"/><rect x="91.0" y="0.0" width="3.6" height="3.6" fill="#c6c9d3"/><rect x="91.0" y="3.5" width="3.6" height="3.6" fill="#c6c9d3"/><rect x="91.0" y="7.0" width="3.6" height="3.6" fill="#afb3c1"/><rect x="91.0" y="10.5" width="3.6" height="3.6" fill="#e8e9ed"/><rect x="94.5" y="0.0" width="3.6" height="3.6" fill="#dddfe4"/><rect x="94.5" y="3.5" width="3.6" height="3.6" fill="#f4f4f6"/><rect x="94.5" y="7.0" width="3.6" height="3.6" fill="#d1d4db"/><rect x="98.0" y="0.0" width="3.6" height="3.6" fill="#c6c9d3"/><rect x="98.0" y="3.5" width="3.6" height="3.6" fill="#afb3c1"/><rect x="98.0" y="7.0" width="3.6" height="3.6" fill="#afb3c1"/><rect x="98.0" y="10.5" width="3.6" height="3.6" fill="#f4f4f6"/><rect x="101.5" y="0.0" width="3.6" height="3.6" fill="#afb3c1"/><rect x="101.5" y="3.5" width="3.6" height="3.6" fill="#dddfe4"/><rect x="101.5" y="7.0" width="3.6" height="3.6" fill="#babec9"/><rect x="101.5" y="10.5" width="3.6" height="3.6" fill="#f4f4f6"/><rect x="105.0" y="0.0" width="3.6" height="3.6" fill="#e8e9ed"/><rect x="105.0" y="3.5" width="3.6" height="3.6" fill="#f4f4f6"/><rect x="105.0" y="7.0" width="3.6" height="3.6" fill="#f4f4f6"/><rect x="108.5" y="0.0" width="3.6" height="3.6" fill="#babec9"/><rect x="108.5" y="3.5" width="3.6" height="3.6" fill="#d1d4db"/><rect x="108.5" y="7.0" width="3.6" height="3.6" fill="#dddfe4"/><rect x="108.5" y="10.5" width="3.6" height="3.6" fill="#e8e9ed"/><rect x="112.0" y="0.0" width="3.6" height="3.6" fill="#dddfe4"/><rect x="112.0" y="3.5" width="3.6" height="3.6" fill="#dddfe4"/><rect x="112.0" y="7.0" width="3.6" height="3.6" fill="#dddfe4"/><rect x="112.0" y="10.5" width="3.6" height="3.6" fill="#dddfe4"/><rect x="115.5" y="0.0" width="3.6" height="3.6" fill="#c6c9d3"/><rect x="115.5" y="3.5" width="3.6" height="3.6" fill="#afb3c1"/><rect x="115.5" y="7.0" width="3.6" height="3.6" fill="#c6c9d3"/><rect x="115.5" y="10.5" width="3.6" height="3.6" fill="#f4f4f6"/><rect x="119.0" y="0.0" width="3.6" height="3.6" fill="#dddfe4"/><rect x="119.0" y="3.5" width="3.6" height="3.6" fill="#afb3c1"/><rect x="119.0" y="7.0" width="3.6" height="3.6" fill="#afb3c1"/><rect x="119.0" y="10.5" width="3.6" height="3.6" fill="#f4f4f6"/><rect x="122.5" y="0.0" width="3.6" height="3.6" fill="#dddfe4"/><rect x="122.5" y="3.5" width="3.6" height="3.6" fill="#afb3c1"/><rect x="122.5" y="7.0" width="3.6" height="3.6" fill="#a4a9b8"/><rect x="122.5" y="10.5" width="3.6" height="3.6" fill="#f4f4f6"/><rect x="126.0" y="0.0" width="3.6" height="3.6" fill="#dddfe4"/><rect x="126.0" y="3.5" width="3.6" height="3.6" fill="#afb3c1"/><rect x="126.0" y="7.0" width="3.6" height="3.6" fill="#c6c9d3"/><rect x="126.0" y="10.5" width="3.6" height="3.6" fill="#f4f4f6"/><rect x="129.5" y="0.0" width="3.6" height="3.6" fill="#dddfe4"/><rect x="129.5" y="3.5" width="3.6" height="3.6" fill="#d1d4db"/><rect x="129.5" y="7.0" width="3.6" height="3.6" fill="#d1d4db"/><rect x="129.5" y="10.5" width="3.6" height="3.6" fill="#f4f4f6"/><rect x="133.0" y="0.0" width="3.6" height="3.6" fill="#babec9"/><rect x="133.0" y="3.5" width="3.6" height="3.6" fill="#afb3c1"/><rect x="133.0" y="7.0" width="3.6" height="3.6" fill="#a4a9b8"/><rect x="133.0" y="10.5" width="3.6" height="3.6" fill="#dddfe4"/><rect x="136.5" y="0.0" width="3.6" height="3.6" fill="#dddfe4"/><rect x="136.5" y="3.5" width="3.6" height="3.6" fill="#d1d4db"/><rect x="136.5" y="7.0" width="3.6" height="3.6" fill="#dddfe4"/><rect x="136.5" y="10.5" width="3.6" height="3.6" fill="#f4f4f6"/><rect x="140.0" y="0.0" width="3.6" height="3.6" fill="#dddfe4"/><rect x="140.0" y="3.5" width="3.6" height="3.6" fill="#babec9"/><rect x="140.0" y="7.0" width="3.6" height="3.6" fill="#afb3c1"/><rect x="140.0" y="10.5" width="3.6" height="3.6" fill="#f4f4f6"/><rect x="143.5" y="0.0" width="3.6" height="3.6" fill="#babec9"/><rect x="143.5" y="3.5" width="3.6" height="3.6" fill="#d1d4db"/><rect x="143.5" y="7.0" width="3.6" height="3.6" fill="#babec9"/><rect x="143.5" y="10.5" width="3.6" height="3.6" fill="#dddfe4"/><rect x="147.0" y="0.0" width="3.6" height="3.6" fill="#e8e9ed"/><rect x="147.0" y="3.5" width="3.6" height="3.6" fill="#e8e9ed"/><rect x="147.0" y="7.0" width="3.6" height="3.6" fill="#e8e9ed"/><rect x="150.5" y="0.0" width="3.6" height="3.6" fill="#babec9"/><rect x="150.5" y="3.5" width="3.6" height="3.6" fill="#babec9"/><rect x="150.5" y="7.0" width="3.6" height="3.6" fill="#a4a9b8"/><rect x="150.5" y="10.5" width="3.6" height="3.6" fill="#dddfe4"/><rect x="154.0" y="0.0" width="3.6" height="3.6" fill="#afb3c1"/><rect x="154.0" y="3.5" width="3.6" height="3.6" fill="#d1d4db"/><rect x="154.0" y="7.0" width="3.6" height="3.6" fill="#d1d4db"/><rect x="154.0" y="10.5" width="3.6" height="3.6" fill="#e8e9ed"/><rect x="157.5" y="0.0" width="3.6" height="3.6" fill="#d1d4db"/><rect x="157.5" y="3.5" width="3.6" height="3.6" fill="#afb3c1"/><rect x="157.5" y="7.0" width="3.6" height="3.6" fill="#afb3c1"/><rect x="157.5" y="10.5" width="3.6" height="3.6" fill="#e8e9ed"/><rect x="161.0" y="0.0" width="3.6" height="3.6" fill="#d1d4db"/><rect x="161.0" y="3.5" width="3.6" height="3.6" fill="#afb3c1"/><rect x="161.0" y="7.0" width="3.6" height="3.6" fill="#c6c9d3"/><rect x="161.0" y="10.5" width="3.6" height="3.6" fill="#dddfe4"/><rect x="164.5" y="0.0" width="3.6" height="3.6" fill="#afb3c1"/><rect x="164.5" y="3.5" width="3.6" height="3.6" fill="#afb3c1"/><rect x="164.5" y="7.0" width="3.6" height="3.6" fill="#afb3c1"/><rect x="164.5" y="10.5" width="3.6" height="3.6" fill="#e8e9ed"/><rect x="168.0" y="0.0" width="3.6" height="3.6" fill="#c6c9d3"/><rect x="168.0" y="3.5" width="3.6" height="3.6" fill="#dddfe4"/><rect x="168.0" y="7.0" width="3.6" height="3.6" fill="#c6c9d3"/><rect x="168.0" y="10.5" width="3.6" height="3.6" fill="#dddfe4"/><rect x="171.5" y="0.0" width="3.6" height="3.6" fill="#babec9"/><rect x="171.5" y="3.5" width="3.6" height="3.6" fill="#d1d4db"/><rect x="171.5" y="7.0" width="3.6" height="3.6" fill="#d1d4db"/><rect x="171.5" y="10.5" width="3.6" height="3.6" fill="#e8e9ed"/><rect x="175.0" y="0.0" width="3.6" height="3.6" fill="#d1d4db"/><rect x="175.0" y="3.5" width="3.6" height="3.6" fill="#c6c9d3"/><rect x="175.0" y="7.0" width="3.6" height="3.6" fill="#babec9"/><rect x="175.0" y="10.5" width="3.6" height="3.6" fill="#f4f4f6"/><rect x="178.5" y="0.0" width="3.6" height="3.6" fill="#dddfe4"/><rect x="178.5" y="3.5" width="3.6" height="3.6" fill="#d1d4db"/><rect x="178.5" y="7.0" width="3.6" height="3.6" fill="#e8e9ed"/><rect x="178.5" y="10.5" width="3.6" height="3.6" fill="#f4f4f6"/></svg>
<svg class="a" style="left:670px;top:644px" width="20" height="20" viewBox="0 0 20 20"><path d="M8.8 4.5H4.5V14.5H14.5V10 M10.2 8.4L16 3 M12.4 2.5H16V6.2" stroke="#2b3140" stroke-width="1.4" fill="none" stroke-linecap="round" stroke-linejoin="round"/></svg>
<div class="a dt" style="left:715px;top:664px">2025-07-10 10:53:19</div>
<div class="a dt" style="left:913px;top:664px">2026-07-04 02:12:46</div>
<svg class="a" style="left:1227px;top:661px" width="24" height="22" viewBox="0 0 24 22"><path d="M4.3 15.9V11.2L14.5 1.6L18.7 6.2L8.7 15.9Z M12.5 15.9H18.9" stroke="#2b3140" stroke-width="1.5" fill="none" stroke-linejoin="round"/></svg>
<svg class="a" style="left:1267.7px;top:658.5px" width="24" height="22" viewBox="0 0 24 22"><g stroke="#2b3140" stroke-width="1.5" fill="none" stroke-linecap="round"><path d="M7.1 5.1A7.8 7.8 0 0 1 19.6 13"/><path d="M7.1 5.1L8.1 8.1"/><path d="M16.9 16.9A7.8 7.8 0 0 1 4.4 9"/><path d="M16.9 16.9L15.9 13.9"/></g></svg>
<svg class="a" style="left:1313px;top:661px" width="20" height="22" viewBox="0 0 20 22"><g stroke="#e5572f" stroke-width="1.5" fill="none" stroke-linejoin="round"><path d="M.7 4.6H15.8 M5 4.4C5 2.8 6.3 1.6 8.1 1.6S11.6 2.8 11.6 4.4 M2.1 4.8L3.4 17.6H13.3L14.6 4.8"/></g></svg>
<svg class="a" style="left:328px;top:730px" width="22" height="22" viewBox="0 0 22 22"><circle cx="10.85" cy="10.75" r="10.8" fill="#000"/><g transform="translate(-0.5,0)"><path d="M12.3 4.6v8.1a2.9 2.9 0 1 1-2.9-2.9" stroke="#25f4ee" stroke-width="2.2" fill="none" transform="translate(-0.6,-0.5)"/><path d="M12.3 4.6c.3 1.7 1.5 2.9 3.2 3.1" stroke="#25f4ee" stroke-width="2.2" fill="none" transform="translate(-0.6,-0.5)"/><path d="M12.3 4.6v8.1a2.9 2.9 0 1 1-2.9-2.9" stroke="#fe2c55" stroke-width="2.2" fill="none" transform="translate(0.6,0.5)"/><path d="M12.3 4.6c.3 1.7 1.5 2.9 3.2 3.1" stroke="#fe2c55" stroke-width="2.2" fill="none" transform="translate(0.6,0.5)"/><path d="M12.3 4.6v8.1a2.9 2.9 0 1 1-2.9-2.9" stroke="#fff" stroke-width="2" fill="none"/><path d="M12.3 4.6c.3 1.7 1.5 2.9 3.2 3.1" stroke="#fff" stroke-width="2" fill="none"/></g></svg>
<div class="a nm" style="left:355px;top:732px">1752062566293 (US)</div>

<div class="a" style="left:656px;top:370px;width:45px;height:39px;border:5px solid #3570fc"></div>
<div class="a" style="left:1204px;top:468px;width:149px;height:49px;border:5px solid #3570fc"></div>
<svg class="a" style="left:1331px;top:648px" width="67" height="67" viewBox="0 0 67 67">
  <defs><clipPath id="dk"><circle cx="33.5" cy="32" r="11.5"/></clipPath></defs>
  <circle cx="33.5" cy="33.5" r="33" fill="#4169ee"/>
  <path d="M50.6 27.2A18.1 18.1 0 1 0 27.6 50.6L32 51.5" stroke="#fff" stroke-width="2.4" fill="none"/>
  <rect x="10" y="26.9" width="5.8" height="12" rx="2.6" fill="#fff"/>
  <rect x="50.3" y="26.9" width="6" height="12" rx="2.6" fill="#fff"/>
  <rect x="30" y="49.4" width="7.3" height="4.2" rx="2.1" fill="#fff"/>
  <circle cx="33.5" cy="32" r="11.5" fill="#fff"/>
  <g clip-path="url(#dk)">
    <path d="M27.8 27.5L34.3 25.3L45 30.2L39.1 39.8L31.4 42.5L30 35.5Z" fill="#4169ee"/>
    <path d="M30.4 35.6L33.8 41.8 M31.6 35.2L38 40.5" stroke="#fff" stroke-width="0.9"/>
  </g>
  <circle cx="32.4" cy="29.6" r="1.4" fill="#fff"/>
</svg>
</body></html>
